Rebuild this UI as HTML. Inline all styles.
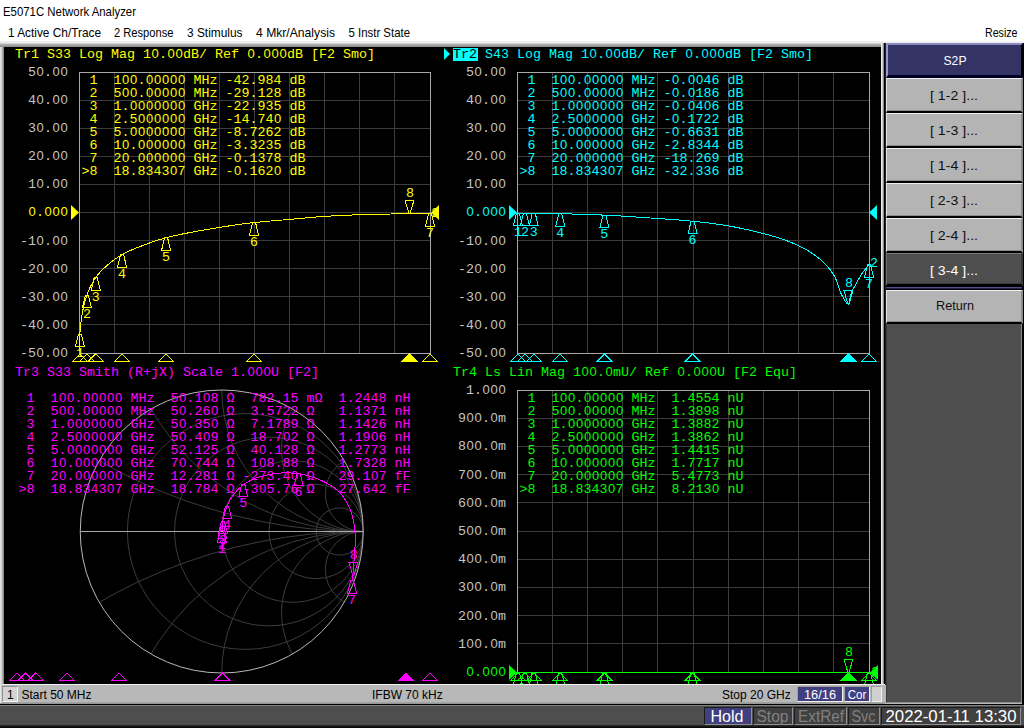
<!DOCTYPE html>
<html><head><meta charset="utf-8"><style>
*{margin:0;padding:0;box-sizing:border-box}
html,body{width:1024px;height:728px;overflow:hidden;background:#fff;position:relative}
.abs{position:absolute}
.btn{position:absolute;left:886px;width:137px;background:#b4b4b4;border-top:1px solid #f0f0f0;border-left:1px solid #e4e4e4;border-right:2px solid #8c8c8c;border-bottom:2px solid #000;box-shadow:inset 0 -1px 0 #8c8c8c}
.btn.sel{background:#333366;border-top:2px solid #8a8ac0;border-left:2px solid #9999cc;border-right:2px solid #000;border-bottom:3px solid #000022;box-shadow:none}
.btn.dark{background:#4e4e4e;border-top:1px solid #787878;border-left:1px solid #707070;border-right:2px solid #383838;box-shadow:inset 0 -1px 0 #383838}
</style></head><body>
<div class="abs" style="left:0;top:41px;width:1024px;height:687px;background:#b8b8b8"></div>
<div class="abs" style="left:0;top:41px;width:885px;height:6px;background:linear-gradient(#f0f0f0,#ececec 33%,#b0b0b0 55%,#8c8c8c)"></div>
<div class="abs" style="left:885px;top:41px;width:139px;height:2px;background:#f0f0f0"></div>
<div class="abs" style="left:0;top:47px;width:4px;height:637px;background:linear-gradient(90deg,#e0e0e0 25%,#d0d0d0 25%,#d0d0d0 50%,#b0b0b0 50%,#b0b0b0 75%,#888 75%)"></div>
<div class="abs" style="left:4px;top:47px;width:877px;height:637px;background:#000"></div>
<div class="abs" style="left:881px;top:43px;width:5px;height:642px;background:linear-gradient(90deg,#f0f0f0 20%,#c8c8c8 20%,#c8c8c8 40%,#909090 40%,#909090 60%,#000 60%,#000 80%,#202020 80%)"></div>
<div class="abs" style="left:886px;top:322px;width:136px;height:381px;background:#4e4e4e;border-top:2px solid #000;border-left:1px solid #3a3a3a;border-bottom:1px solid #8a8a8a;border-right:1px solid #8a8a8a"></div>
<div class="abs" style="left:1022px;top:43px;width:2px;height:661px;background:#000"></div>
<div class="btn sel" style="top:43px;height:35px"></div><div class="btn normal" style="top:78px;height:35px"></div><div class="btn normal" style="top:113px;height:35px"></div><div class="btn normal" style="top:148px;height:35px"></div><div class="btn normal" style="top:183px;height:35px"></div><div class="btn normal" style="top:218px;height:35px"></div><div class="btn dark" style="top:253px;height:33px"></div><div class="abs" style="left:886px;top:286px;width:137px;height:4px;background:#000"></div><div class="abs" style="left:886px;top:287px;width:136px;height:2px;background:linear-gradient(#505088 50%,#202048 50%)"></div><div class="btn normal" style="top:290px;height:34px"></div>
<div class="abs" style="left:0;top:684px;width:885px;height:20px;background:#b8b8b8;border-top:1px solid #f0f0f0"></div>
<div class="abs" style="left:0;top:702px;width:885px;height:2px;background:linear-gradient(#a8a8a8,#909090)"></div>
<div class="abs" style="left:0;top:684px;width:2px;height:19px;background:linear-gradient(90deg,#e4e4e4 50%,#d0d0d0 50%)"></div>
<div class="abs" style="left:2px;top:686px;width:16px;height:16px;background:#d4d4d4;border-top:1px solid #909090;border-left:1px solid #909090;border-bottom:1px solid #f4f4f4;border-right:1px solid #f4f4f4"></div>
<div class="abs" style="left:797px;top:686px;width:46px;height:16px;background:#404080;border-top:1px solid #a0a0a0;border-left:1px solid #a0a0a0;border-bottom:1px solid #f0f0f0;border-right:1px solid #f0f0f0"></div>
<div class="abs" style="left:844px;top:686px;width:26px;height:16px;background:#404080;border-top:1px solid #a0a0a0;border-left:1px solid #a0a0a0;border-bottom:1px solid #f0f0f0;border-right:1px solid #f0f0f0"></div>
<div class="abs" style="left:871px;top:686px;width:11px;height:16px;background:#d0d0d0;border-top:1px solid #a0a0a0;border-left:1px solid #a0a0a0;border-bottom:1px solid #f0f0f0;border-right:1px solid #f0f0f0"></div>
<div class="abs" style="left:0;top:704px;width:1024px;height:24px;background:#4e4e4e;border-top:1px solid #000"></div>
<div class="abs" style="left:0;top:705px;width:1024px;height:1px;background:#808080"></div>
<div class="abs" style="left:0;top:725px;width:1024px;height:3px;background:linear-gradient(#303030,#000)"></div>
<div class="abs" style="left:704px;top:707px;width:48px;height:18px;background:#404080;border-top:1px solid #1c1c1c;border-left:1px solid #1c1c1c;border-bottom:1px solid #909090;border-right:1px solid #909090"></div>
<div class="abs" style="left:753px;top:707px;width:40px;height:18px;background:#404040;border-top:1px solid #1c1c1c;border-left:1px solid #1c1c1c;border-bottom:1px solid #909090;border-right:1px solid #909090"></div>
<div class="abs" style="left:794px;top:707px;width:53px;height:18px;background:#404040;border-top:1px solid #1c1c1c;border-left:1px solid #1c1c1c;border-bottom:1px solid #909090;border-right:1px solid #909090"></div>
<div class="abs" style="left:848px;top:707px;width:32px;height:18px;background:#404040;border-top:1px solid #1c1c1c;border-left:1px solid #1c1c1c;border-bottom:1px solid #909090;border-right:1px solid #909090"></div>
<div class="abs" style="left:881px;top:707px;width:140px;height:18px;background:#404040;border-top:1px solid #1c1c1c;border-left:1px solid #1c1c1c;border-bottom:1px solid #909090;border-right:1px solid #909090"></div>
<svg width="877" height="637" viewBox="4 47 877 637" style="position:absolute;left:4px;top:47px;font-family:'Liberation Mono', monospace"><path d="M114.5 72V353M149.5 72V353M184.5 72V353M219.5 72V353M254.5 72V353M289.5 72V353M324.5 72V353M359.5 72V353M394.5 72V353M79 100.5H430M79 128.5H430M79 156.5H430M79 184.5H430M79 212.5H430M79 240.5H430M79 268.5H430M79 296.5H430M79 324.5H430" stroke="#3c3c3c" stroke-width="1" fill="none"/><rect x="79.5" y="72.5" width="351" height="281" stroke="#a8a8a8" stroke-width="1" fill="none"/><text x="28 36.4 44 52.4 60.4" y="76" fill="#c4c4c4" font-size="13.333" style="white-space:pre">5<tspan font-family="Liberation Sans" font-size="13">0</tspan>.<tspan font-family="Liberation Sans" font-size="13">00</tspan></text><text x="28 36.4 44 52.4 60.4" y="104" fill="#c4c4c4" font-size="13.333" style="white-space:pre">4<tspan font-family="Liberation Sans" font-size="13">0</tspan>.<tspan font-family="Liberation Sans" font-size="13">00</tspan></text><text x="28 36.4 44 52.4 60.4" y="132" fill="#c4c4c4" font-size="13.333" style="white-space:pre">3<tspan font-family="Liberation Sans" font-size="13">0</tspan>.<tspan font-family="Liberation Sans" font-size="13">00</tspan></text><text x="28 36.4 44 52.4 60.4" y="160" fill="#c4c4c4" font-size="13.333" style="white-space:pre">2<tspan font-family="Liberation Sans" font-size="13">0</tspan>.<tspan font-family="Liberation Sans" font-size="13">00</tspan></text><text x="28 36.4 44 52.4 60.4" y="188" fill="#c4c4c4" font-size="13.333" style="white-space:pre">1<tspan font-family="Liberation Sans" font-size="13">0</tspan>.<tspan font-family="Liberation Sans" font-size="13">00</tspan></text><text x="28.4 36 44.4 52.4 60.4" y="216" fill="#ffff00" font-size="13.333" style="white-space:pre"><tspan font-family="Liberation Sans" font-size="13">0</tspan>.<tspan font-family="Liberation Sans" font-size="13">000</tspan></text><text x="20 28 36.4 44 52.4 60.4" y="245" fill="#c4c4c4" font-size="13.333" style="white-space:pre">-1<tspan font-family="Liberation Sans" font-size="13">0</tspan>.<tspan font-family="Liberation Sans" font-size="13">00</tspan></text><text x="20 28 36.4 44 52.4 60.4" y="273" fill="#c4c4c4" font-size="13.333" style="white-space:pre">-2<tspan font-family="Liberation Sans" font-size="13">0</tspan>.<tspan font-family="Liberation Sans" font-size="13">00</tspan></text><text x="20 28 36.4 44 52.4 60.4" y="301" fill="#c4c4c4" font-size="13.333" style="white-space:pre">-3<tspan font-family="Liberation Sans" font-size="13">0</tspan>.<tspan font-family="Liberation Sans" font-size="13">00</tspan></text><text x="20 28 36.4 44 52.4 60.4" y="329" fill="#c4c4c4" font-size="13.333" style="white-space:pre">-4<tspan font-family="Liberation Sans" font-size="13">0</tspan>.<tspan font-family="Liberation Sans" font-size="13">00</tspan></text><text x="20 28 36.4 44 52.4 60.4" y="357" fill="#c4c4c4" font-size="13.333" style="white-space:pre">-5<tspan font-family="Liberation Sans" font-size="13">0</tspan>.<tspan font-family="Liberation Sans" font-size="13">00</tspan></text><polyline points="79.00,350.94 79.29,344.52 79.58,338.72 79.88,334.06 80.17,330.36 80.46,327.04 80.75,324.07 81.05,321.45 81.34,319.16 81.63,317.18 81.92,315.40 82.22,313.70 82.51,312.08 82.80,310.54 83.09,309.08 83.39,307.68 83.68,306.36 83.97,305.09 84.27,303.89 84.56,302.74 84.85,301.64 85.14,300.59 85.44,299.59 85.73,298.63 86.02,297.72 86.31,296.83 86.61,295.98 86.90,295.15 87.19,294.35 87.48,293.57 87.78,292.81 88.07,292.07 88.36,291.34 88.65,290.64 88.94,289.95 89.24,289.27 89.53,288.62 89.82,287.98 90.11,287.35 90.41,286.74 90.70,286.15 90.99,285.56 91.28,285.00 91.58,284.44 91.87,283.90 92.16,283.37 92.45,282.85 92.75,282.34 93.04,281.84 93.33,281.35 93.62,280.88 93.92,280.41 94.21,279.95 94.50,279.49 94.80,279.05 95.09,278.61 95.38,278.18 95.67,277.76 95.97,277.34 96.26,276.93 96.55,276.53 96.84,276.13 97.14,275.74 97.43,275.36 97.72,274.99 98.01,274.62 98.31,274.26 98.60,273.91 98.89,273.56 99.18,273.21 99.47,272.88 99.77,272.54 100.06,272.22 100.35,271.90 100.65,271.58 100.94,271.27 101.23,270.96 101.52,270.66 101.81,270.36 102.11,270.06 102.40,269.77 102.69,269.48 102.98,269.20 103.28,268.92 103.57,268.64 103.86,268.37 104.16,268.09 104.45,267.82 104.74,267.55 105.03,267.29 105.33,267.02 105.62,266.76 105.91,266.50 106.20,266.24 106.50,265.98 106.79,265.72 107.08,265.47 107.37,265.22 107.67,264.96 107.96,264.71 108.25,264.47 108.54,264.22 108.84,263.97 109.13,263.73 109.42,263.49 109.71,263.25 110.01,263.01 110.30,262.77 110.59,262.54 110.88,262.31 111.18,262.07 111.47,261.84 111.76,261.62 112.05,261.39 112.34,261.16 112.64,260.94 112.93,260.72 113.22,260.50 113.52,260.28 113.81,260.07 114.10,259.85 114.39,259.64 114.69,259.43 114.98,259.22 115.27,259.01 115.56,258.81 115.86,258.60 116.15,258.40 116.44,258.20 116.73,258.00 117.03,257.80 117.32,257.61 117.61,257.42 117.90,257.22 118.20,257.03 118.49,256.85 118.78,256.66 119.07,256.48 119.37,256.29 119.66,256.11 119.95,255.93 120.24,255.76 120.54,255.58 120.83,255.41 121.12,255.24 121.41,255.06 121.71,254.90 122.00,254.73 122.29,254.57 122.58,254.40 122.88,254.24 123.17,254.08 123.46,253.92 123.75,253.76 124.04,253.61 124.34,253.45 124.63,253.30 124.92,253.15 125.22,253.00 125.51,252.85 125.80,252.70 126.09,252.55 126.39,252.41 126.68,252.26 126.97,252.12 127.26,251.98 127.56,251.84 127.85,251.70 128.14,251.56 128.43,251.42 128.72,251.29 129.02,251.15 129.31,251.02 129.60,250.88 129.90,250.75 130.19,250.62 130.48,250.49 130.77,250.36 131.06,250.23 131.36,250.10 131.65,249.97 131.94,249.85 132.24,249.72 132.53,249.59 132.82,249.47 133.11,249.35 133.41,249.22 133.70,249.10 133.99,248.98 134.28,248.86 134.58,248.74 134.87,248.62 135.16,248.50 135.45,248.38 135.75,248.26 136.04,248.14 136.33,248.02 136.62,247.90 136.92,247.79 137.21,247.67 137.50,247.55 137.79,247.44 138.09,247.32 138.38,247.21 138.67,247.09 138.96,246.98 139.25,246.86 139.55,246.75 139.84,246.63 140.13,246.52 140.43,246.41 140.72,246.29 141.01,246.18 141.30,246.06 141.60,245.95 141.89,245.84 142.18,245.73 142.47,245.61 142.76,245.50 143.06,245.39 143.35,245.28 143.64,245.16 143.94,245.05 144.23,244.94 144.52,244.83 144.81,244.72 145.11,244.61 145.40,244.50 145.69,244.39 145.98,244.28 146.28,244.17 146.57,244.06 146.86,243.95 147.15,243.84 147.44,243.74 147.74,243.63 148.03,243.52 148.32,243.41 148.62,243.31 148.91,243.20 149.20,243.09 149.49,242.99 149.78,242.88 150.08,242.78 150.37,242.67 150.66,242.57 150.96,242.46 151.25,242.36 151.54,242.26 151.83,242.16 152.12,242.05 152.42,241.95 152.71,241.85 153.00,241.75 153.30,241.65 153.59,241.55 153.88,241.45 154.17,241.35 154.47,241.25 154.76,241.15 155.05,241.05 155.34,240.96 155.63,240.86 155.93,240.76 156.22,240.67 156.51,240.57 156.81,240.48 157.10,240.38 157.39,240.29 157.68,240.20 157.98,240.10 158.27,240.01 158.56,239.92 158.85,239.83 159.14,239.74 159.44,239.65 159.73,239.56 160.02,239.47 160.31,239.38 160.61,239.30 160.90,239.21 161.19,239.12 161.49,239.04 161.78,238.95 162.07,238.87 162.36,238.78 162.66,238.70 162.95,238.62 163.24,238.53 163.53,238.45 163.82,238.37 164.12,238.29 164.41,238.21 164.70,238.13 165.00,238.06 165.29,237.98 165.58,237.90 165.87,237.83 166.17,237.75 166.46,237.68 166.75,237.60 167.04,237.53 167.34,237.45 167.63,237.38 167.92,237.31 168.21,237.23 168.50,237.16 168.80,237.09 169.09,237.02 169.38,236.95 169.68,236.87 169.97,236.80 170.26,236.73 170.55,236.66 170.84,236.59 171.14,236.52 171.43,236.45 171.72,236.38 172.01,236.31 172.31,236.24 172.60,236.18 172.89,236.11 173.19,236.04 173.48,235.97 173.77,235.90 174.06,235.84 174.36,235.77 174.65,235.70 174.94,235.64 175.23,235.57 175.53,235.51 175.82,235.44 176.11,235.37 176.40,235.31 176.70,235.24 176.99,235.18 177.28,235.12 177.57,235.05 177.87,234.99 178.16,234.92 178.45,234.86 178.74,234.80 179.04,234.73 179.33,234.67 179.62,234.61 179.91,234.55 180.20,234.49 180.50,234.42 180.79,234.36 181.08,234.30 181.38,234.24 181.67,234.18 181.96,234.12 182.25,234.06 182.55,234.00 182.84,233.94 183.13,233.88 183.42,233.82 183.72,233.76 184.01,233.70 184.30,233.64 184.59,233.58 184.88,233.52 185.18,233.46 185.47,233.41 185.76,233.35 186.06,233.29 186.35,233.23 186.64,233.17 186.93,233.12 187.23,233.06 187.52,233.00 187.81,232.95 188.10,232.89 188.40,232.83 188.69,232.78 188.98,232.72 189.27,232.66 189.56,232.61 189.86,232.55 190.15,232.50 190.44,232.44 190.74,232.39 191.03,232.33 191.32,232.28 191.61,232.22 191.91,232.17 192.20,232.11 192.49,232.06 192.78,232.01 193.08,231.95 193.37,231.90 193.66,231.84 193.95,231.79 194.25,231.74 194.54,231.68 194.83,231.63 195.12,231.58 195.42,231.52 195.71,231.47 196.00,231.42 196.29,231.37 196.59,231.31 196.88,231.26 197.17,231.21 197.46,231.16 197.75,231.10 198.05,231.05 198.34,231.00 198.63,230.95 198.93,230.90 199.22,230.85 199.51,230.79 199.80,230.74 200.10,230.69 200.39,230.64 200.68,230.59 200.97,230.54 201.26,230.49 201.56,230.44 201.85,230.39 202.14,230.34 202.44,230.29 202.73,230.24 203.02,230.18 203.31,230.13 203.61,230.08 203.90,230.03 204.19,229.98 204.48,229.93 204.78,229.88 205.07,229.83 205.36,229.78 205.65,229.73 205.94,229.68 206.24,229.63 206.53,229.58 206.82,229.54 207.12,229.49 207.41,229.44 207.70,229.39 207.99,229.34 208.28,229.29 208.58,229.24 208.87,229.19 209.16,229.14 209.46,229.09 209.75,229.04 210.04,228.99 210.33,228.94 210.62,228.89 210.92,228.84 211.21,228.80 211.50,228.75 211.80,228.70 212.09,228.65 212.38,228.60 212.67,228.55 212.97,228.50 213.26,228.45 213.55,228.40 213.84,228.36 214.14,228.31 214.43,228.26 214.72,228.21 215.01,228.16 215.31,228.11 215.60,228.06 215.89,228.02 216.18,227.97 216.48,227.92 216.77,227.87 217.06,227.82 217.35,227.78 217.65,227.73 217.94,227.68 218.23,227.63 218.52,227.58 218.82,227.54 219.11,227.49 219.40,227.44 219.69,227.39 219.99,227.35 220.28,227.30 220.57,227.25 220.86,227.21 221.16,227.16 221.45,227.11 221.74,227.06 222.03,227.02 222.33,226.97 222.62,226.92 222.91,226.88 223.20,226.83 223.50,226.79 223.79,226.74 224.08,226.69 224.37,226.65 224.67,226.60 224.96,226.55 225.25,226.51 225.54,226.46 225.84,226.42 226.13,226.37 226.42,226.33 226.71,226.28 227.00,226.24 227.30,226.19 227.59,226.14 227.88,226.10 228.17,226.05 228.47,226.01 228.76,225.97 229.05,225.92 229.35,225.88 229.64,225.83 229.93,225.79 230.22,225.74 230.52,225.70 230.81,225.66 231.10,225.61 231.39,225.57 231.69,225.52 231.98,225.48 232.27,225.44 232.56,225.39 232.86,225.35 233.15,225.31 233.44,225.26 233.73,225.22 234.03,225.18 234.32,225.14 234.61,225.09 234.90,225.05 235.20,225.01 235.49,224.97 235.78,224.92 236.07,224.88 236.37,224.84 236.66,224.80 236.95,224.76 237.24,224.72 237.53,224.68 237.83,224.63 238.12,224.59 238.41,224.55 238.71,224.51 239.00,224.47 239.29,224.43 239.58,224.39 239.88,224.35 240.17,224.31 240.46,224.27 240.75,224.23 241.04,224.19 241.34,224.15 241.63,224.11 241.92,224.07 242.22,224.03 242.51,224.00 242.80,223.96 243.09,223.92 243.39,223.88 243.68,223.84 243.97,223.80 244.26,223.77 244.56,223.73 244.85,223.69 245.14,223.65 245.43,223.62 245.73,223.58 246.02,223.54 246.31,223.50 246.60,223.47 246.90,223.43 247.19,223.39 247.48,223.36 247.77,223.32 248.07,223.29 248.36,223.25 248.65,223.22 248.94,223.18 249.24,223.14 249.53,223.11 249.82,223.07 250.11,223.04 250.41,223.01 250.70,222.97 250.99,222.94 251.28,222.90 251.58,222.87 251.87,222.84 252.16,222.80 252.45,222.77 252.75,222.74 253.04,222.70 253.33,222.67 253.62,222.64 253.92,222.61 254.21,222.57 254.50,222.54 254.79,222.51 255.09,222.48 255.38,222.45 255.67,222.41 255.96,222.38 256.25,222.35 256.55,222.32 256.84,222.29 257.13,222.26 257.43,222.23 257.72,222.20 258.01,222.17 258.30,222.14 258.60,222.11 258.89,222.08 259.18,222.05 259.47,222.02 259.76,221.99 260.06,221.96 260.35,221.94 260.64,221.91 260.94,221.88 261.23,221.85 261.52,221.82 261.81,221.79 262.11,221.77 262.40,221.74 262.69,221.71 262.98,221.68 263.27,221.65 263.57,221.63 263.86,221.60 264.15,221.57 264.44,221.55 264.74,221.52 265.03,221.49 265.32,221.46 265.62,221.44 265.91,221.41 266.20,221.39 266.49,221.36 266.79,221.33 267.08,221.31 267.37,221.28 267.66,221.25 267.96,221.23 268.25,221.20 268.54,221.18 268.83,221.15 269.12,221.13 269.42,221.10 269.71,221.07 270.00,221.05 270.30,221.02 270.59,221.00 270.88,220.97 271.17,220.95 271.47,220.92 271.76,220.90 272.05,220.87 272.34,220.85 272.63,220.82 272.93,220.80 273.22,220.77 273.51,220.75 273.81,220.72 274.10,220.70 274.39,220.68 274.68,220.65 274.98,220.63 275.27,220.60 275.56,220.58 275.85,220.55 276.15,220.53 276.44,220.50 276.73,220.48 277.02,220.46 277.32,220.43 277.61,220.41 277.90,220.38 278.19,220.36 278.49,220.33 278.78,220.31 279.07,220.29 279.36,220.26 279.65,220.24 279.95,220.21 280.24,220.19 280.53,220.17 280.83,220.14 281.12,220.12 281.41,220.09 281.70,220.07 282.00,220.04 282.29,220.02 282.58,220.00 282.87,219.97 283.16,219.95 283.46,219.92 283.75,219.90 284.04,219.87 284.33,219.85 284.63,219.82 284.92,219.80 285.21,219.78 285.50,219.75 285.80,219.73 286.09,219.70 286.38,219.68 286.68,219.65 286.97,219.63 287.26,219.60 287.55,219.58 287.85,219.55 288.14,219.53 288.43,219.50 288.72,219.48 289.01,219.45 289.31,219.43 289.60,219.40 289.89,219.38 290.19,219.35 290.48,219.32 290.77,219.30 291.06,219.27 291.36,219.25 291.65,219.22 291.94,219.20 292.23,219.17 292.53,219.14 292.82,219.12 293.11,219.09 293.40,219.07 293.70,219.04 293.99,219.01 294.28,218.99 294.57,218.96 294.87,218.93 295.16,218.91 295.45,218.88 295.74,218.85 296.04,218.83 296.33,218.80 296.62,218.77 296.91,218.75 297.21,218.72 297.50,218.69 297.79,218.67 298.08,218.64 298.38,218.61 298.67,218.59 298.96,218.56 299.25,218.53 299.55,218.51 299.84,218.48 300.13,218.45 300.42,218.42 300.72,218.40 301.01,218.37 301.30,218.34 301.59,218.32 301.88,218.29 302.18,218.26 302.47,218.24 302.76,218.21 303.05,218.18 303.35,218.16 303.64,218.13 303.93,218.10 304.23,218.07 304.52,218.05 304.81,218.02 305.10,217.99 305.39,217.97 305.69,217.94 305.98,217.91 306.27,217.89 306.57,217.86 306.86,217.83 307.15,217.81 307.44,217.78 307.74,217.76 308.03,217.73 308.32,217.70 308.61,217.68 308.91,217.65 309.20,217.62 309.49,217.60 309.78,217.57 310.08,217.55 310.37,217.52 310.66,217.49 310.95,217.47 311.25,217.44 311.54,217.42 311.83,217.39 312.12,217.37 312.42,217.34 312.71,217.32 313.00,217.29 313.29,217.27 313.59,217.24 313.88,217.22 314.17,217.19 314.46,217.17 314.75,217.14 315.05,217.12 315.34,217.09 315.63,217.07 315.93,217.04 316.22,217.02 316.51,217.00 316.80,216.97 317.10,216.95 317.39,216.92 317.68,216.90 317.97,216.88 318.27,216.85 318.56,216.83 318.85,216.81 319.14,216.78 319.44,216.76 319.73,216.74 320.02,216.72 320.31,216.69 320.61,216.67 320.90,216.65 321.19,216.63 321.48,216.61 321.77,216.58 322.07,216.56 322.36,216.54 322.65,216.52 322.95,216.50 323.24,216.48 323.53,216.46 323.82,216.44 324.12,216.42 324.41,216.40 324.70,216.38 324.99,216.36 325.29,216.34 325.58,216.32 325.87,216.30 326.16,216.28 326.46,216.26 326.75,216.24 327.04,216.22 327.33,216.20 327.63,216.18 327.92,216.17 328.21,216.15 328.50,216.13 328.80,216.11 329.09,216.10 329.38,216.08 329.67,216.06 329.97,216.05 330.26,216.03 330.55,216.01 330.84,216.00 331.13,215.98 331.43,215.96 331.72,215.95 332.01,215.93 332.31,215.91 332.60,215.90 332.89,215.88 333.18,215.87 333.48,215.85 333.77,215.83 334.06,215.82 334.35,215.80 334.64,215.79 334.94,215.77 335.23,215.76 335.52,215.74 335.81,215.73 336.11,215.71 336.40,215.70 336.69,215.68 336.99,215.67 337.28,215.65 337.57,215.64 337.86,215.62 338.16,215.61 338.45,215.59 338.74,215.58 339.03,215.56 339.32,215.55 339.62,215.53 339.91,215.52 340.20,215.51 340.50,215.49 340.79,215.48 341.08,215.46 341.37,215.45 341.67,215.44 341.96,215.42 342.25,215.41 342.54,215.40 342.84,215.38 343.13,215.37 343.42,215.36 343.71,215.34 344.00,215.33 344.30,215.32 344.59,215.30 344.88,215.29 345.18,215.28 345.47,215.26 345.76,215.25 346.05,215.24 346.35,215.23 346.64,215.21 346.93,215.20 347.22,215.19 347.52,215.18 347.81,215.17 348.10,215.15 348.39,215.14 348.69,215.13 348.98,215.12 349.27,215.11 349.56,215.09 349.86,215.08 350.15,215.07 350.44,215.06 350.73,215.05 351.03,215.04 351.32,215.03 351.61,215.01 351.90,215.00 352.20,214.99 352.49,214.98 352.78,214.97 353.07,214.96 353.37,214.95 353.66,214.94 353.95,214.93 354.24,214.92 354.54,214.91 354.83,214.90 355.12,214.89 355.41,214.88 355.71,214.87 356.00,214.86 356.29,214.85 356.58,214.84 356.88,214.83 357.17,214.82 357.46,214.81 357.75,214.80 358.05,214.79 358.34,214.78 358.63,214.77 358.92,214.76 359.21,214.75 359.51,214.74 359.80,214.73 360.09,214.73 360.38,214.72 360.68,214.71 360.97,214.70 361.26,214.69 361.56,214.68 361.85,214.67 362.14,214.66 362.43,214.66 362.73,214.65 363.02,214.64 363.31,214.63 363.60,214.62 363.90,214.61 364.19,214.60 364.48,214.60 364.77,214.59 365.06,214.58 365.36,214.57 365.65,214.56 365.94,214.56 366.24,214.55 366.53,214.54 366.82,214.53 367.11,214.52 367.41,214.52 367.70,214.51 367.99,214.50 368.28,214.49 368.58,214.49 368.87,214.48 369.16,214.47 369.45,214.46 369.75,214.46 370.04,214.45 370.33,214.44 370.62,214.43 370.92,214.43 371.21,214.42 371.50,214.41 371.79,214.40 372.09,214.40 372.38,214.39 372.67,214.38 372.96,214.38 373.25,214.37 373.55,214.36 373.84,214.36 374.13,214.35 374.43,214.34 374.72,214.33 375.01,214.33 375.30,214.32 375.59,214.31 375.89,214.31 376.18,214.30 376.47,214.29 376.77,214.29 377.06,214.28 377.35,214.27 377.64,214.27 377.94,214.26 378.23,214.26 378.52,214.25 378.81,214.24 379.11,214.24 379.40,214.23 379.69,214.22 379.98,214.22 380.28,214.21 380.57,214.20 380.86,214.20 381.15,214.19 381.45,214.19 381.74,214.18 382.03,214.17 382.32,214.17 382.62,214.16 382.91,214.16 383.20,214.15 383.49,214.14 383.79,214.14 384.08,214.13 384.37,214.13 384.66,214.12 384.95,214.11 385.25,214.11 385.54,214.10 385.83,214.10 386.13,214.09 386.42,214.09 386.71,214.08 387.00,214.07 387.30,214.07 387.59,214.06 387.88,214.06 388.17,214.05 388.47,214.04 388.76,214.04 389.05,214.03 389.34,214.03 389.64,214.02 389.93,214.01 390.22,214.01 390.51,214.00 390.81,214.00 391.10,213.99 391.39,213.98 391.68,213.98 391.98,213.97 392.27,213.97 392.56,213.96 392.85,213.95 393.15,213.95 393.44,213.94 393.73,213.94 394.02,213.93 394.31,213.92 394.61,213.92 394.90,213.91 395.19,213.91 395.49,213.90 395.78,213.89 396.07,213.89 396.36,213.88 396.66,213.88 396.95,213.87 397.24,213.87 397.53,213.86 397.82,213.86 398.12,213.85 398.41,213.85 398.70,213.84 399.00,213.83 399.29,213.83 399.58,213.82 399.87,213.82 400.17,213.81 400.46,213.81 400.75,213.80 401.04,213.80 401.33,213.80 401.63,213.79 401.92,213.79 402.21,213.78 402.51,213.78 402.80,213.77 403.09,213.77 403.38,213.77 403.68,213.76 403.97,213.76 404.26,213.75 404.55,213.75 404.85,213.75 405.14,213.74 405.43,213.74 405.72,213.74 406.02,213.73 406.31,213.73 406.60,213.73 406.89,213.72 407.19,213.72 407.48,213.72 407.77,213.72 408.06,213.71 408.36,213.71 408.65,213.71 408.94,213.71 409.23,213.71 409.53,213.71 409.82,213.70 410.11,213.70 410.40,213.70 410.70,213.70 410.99,213.70 411.28,213.70 411.57,213.69 411.87,213.69 412.16,213.69 412.45,213.69 412.74,213.69 413.04,213.69 413.33,213.69 413.62,213.68 413.91,213.68 414.21,213.68 414.50,213.68 414.79,213.68 415.08,213.68 415.38,213.68 415.67,213.67 415.96,213.67 416.25,213.67 416.55,213.67 416.84,213.67 417.13,213.67 417.42,213.67 417.72,213.67 418.01,213.66 418.30,213.66 418.59,213.66 418.89,213.66 419.18,213.66 419.47,213.66 419.76,213.66 420.06,213.66 420.35,213.66 420.64,213.65 420.93,213.65 421.23,213.65 421.52,213.65 421.81,213.65 422.10,213.65 422.40,213.65 422.69,213.65 422.98,213.65 423.27,213.65 423.57,213.65 423.86,213.64 424.15,213.64 424.44,213.64 424.74,213.64 425.03,213.64 425.32,213.64 425.61,213.64 425.91,213.64 426.20,213.64 426.49,213.64 426.78,213.64 427.08,213.64 427.37,213.64 427.66,213.64 427.95,213.64 428.25,213.64 428.54,213.64 428.83,213.64 429.12,213.64 429.42,213.64 429.71,213.64 430.00,213.64" stroke="#ffff00" fill="none" stroke-width="1" shape-rendering="crispEdges"/><polygon points="78.3796992481203,334.03504000000004 81.3796992481203,334.03504000000004 84.3796992481203,346.53504000000004 75.3796992481203,346.53504000000004" stroke="#ffff00" fill="none" stroke-width="1" shape-rendering="crispEdges"/><text x="75.8797" y="357.03504000000004" fill="#ffff00" font-size="13.333" style="white-space:pre">1</text><polygon points="85.4172932330827,295.09968000000003 88.4172932330827,295.09968000000003 91.4172932330827,307.59968000000003 82.4172932330827,307.59968000000003" stroke="#ffff00" fill="none" stroke-width="1" shape-rendering="crispEdges"/><text x="82.9173" y="318.09968000000003" fill="#ffff00" font-size="13.333" style="white-space:pre">2</text><polygon points="94.21428571428571,277.69735000000003 97.21428571428571,277.69735000000003 100.21428571428571,290.19735000000003 91.21428571428571,290.19735000000003" stroke="#ffff00" fill="none" stroke-width="1" shape-rendering="crispEdges"/><text x="91.7143" y="300.69735000000003" fill="#ffff00" font-size="13.333" style="white-space:pre">3</text><polygon points="120.60526315789474,254.6694 123.60526315789474,254.6694 126.60526315789474,267.1694 117.60526315789474,267.1694" stroke="#ffff00" fill="none" stroke-width="1" shape-rendering="crispEdges"/><text x="118.105" y="277.6694" fill="#ffff00" font-size="13.333" style="white-space:pre">4</text><polygon points="164.59022556390977,237.77062199999997 167.59022556390977,237.77062199999997 170.59022556390977,250.27062199999997 161.59022556390977,250.27062199999997" stroke="#ffff00" fill="none" stroke-width="1" shape-rendering="crispEdges"/><text x="162.09" y="260.770622" fill="#ffff00" font-size="13.333" style="white-space:pre">5</text><polygon points="252.56015037593983,222.589035 255.56015037593983,222.589035 258.5601503759398,235.089035 249.56015037593983,235.089035" stroke="#ffff00" fill="none" stroke-width="1" shape-rendering="crispEdges"/><text x="250.06" y="245.589035" fill="#ffff00" font-size="13.333" style="white-space:pre">6</text><polygon points="428.5,213.637218 431.5,213.637218 434.5,226.137218 425.5,226.137218" stroke="#ffff00" fill="none" stroke-width="1" shape-rendering="crispEdges"/><text x="426" y="236.637218" fill="#ffff00" font-size="13.333" style="white-space:pre">7</text><polygon points="408.99081488721805,213.70522 409.99081488721805,213.70522 413.99081488721805,200.20522 404.99081488721805,200.20522" stroke="#ffff00" fill="none" stroke-width="1" shape-rendering="crispEdges"/><text x="405.991" y="196.70522" fill="#ffff00" font-size="13.333" style="white-space:pre">8</text><polygon points="71,205.0 79,212.5 71,220.0" fill="#ffff00"/><text x="431" y="217" fill="#ffff00" font-size="13.333" style="white-space:pre">2</text><polygon points="439,205.0 431,212.5 439,220.0" fill="#ffff00"/><polygon points="79.8796992481203,354 86.8796992481203,361 72.8796992481203,361" stroke="#ffff00" fill="none" stroke-width="1" shape-rendering="crispEdges"/><polygon points="86.9172932330827,354 93.9172932330827,361 79.9172932330827,361" stroke="#ffff00" fill="none" stroke-width="1" shape-rendering="crispEdges"/><polygon points="95.71428571428571,354 102.71428571428571,361 88.71428571428571,361" stroke="#ffff00" fill="none" stroke-width="1" shape-rendering="crispEdges"/><polygon points="122.10526315789474,354 129.10526315789474,361 115.10526315789474,361" stroke="#ffff00" fill="none" stroke-width="1" shape-rendering="crispEdges"/><polygon points="166.09022556390977,354 173.09022556390977,361 159.09022556390977,361" stroke="#ffff00" fill="none" stroke-width="1" shape-rendering="crispEdges"/><polygon points="254.06015037593983,354 261.0601503759398,361 247.06015037593983,361" stroke="#ffff00" fill="none" stroke-width="1" shape-rendering="crispEdges"/><polygon points="430.0,354 437.0,361 423.0,361" stroke="#ffff00" fill="none" stroke-width="1" shape-rendering="crispEdges"/><polygon points="409.49081488721805,354 416.49081488721805,361 402.49081488721805,361" stroke="#ffff00" fill="#ffff00" stroke-width="1" shape-rendering="crispEdges"/><text x="15 23 31 39 47 55 63 71 79 87 95 103 111 119 127 135 143 151.4 159 167.4 175.4 183 191 199 207 215 223 231 239 247.4 255 263.4 271.4 279.4 287 295 303 311 319 327 335 343 351 359 367" y="58" fill="#ffff00" font-size="13.333" style="white-space:pre">Tr1 S33 Log Mag 1<tspan font-family="Liberation Sans" font-size="13">0</tspan>.<tspan font-family="Liberation Sans" font-size="13">00</tspan>dB/ Ref <tspan font-family="Liberation Sans" font-size="13">0</tspan>.<tspan font-family="Liberation Sans" font-size="13">000</tspan>dB [F2 Smo]</text><text x="81.5 89.5 97.5 105.5 113.5 121.9 129.9 137.5 145.9 153.9 161.9 169.9 177.9 185.5 193.5 201.5 209.5 217.5 225.5 233.5 241.5 249.5 257.5 265.5 273.5 281.5 289.5 297.5" y="84" fill="#ffff00" font-size="13.333" style="white-space:pre"> 1  1<tspan font-family="Liberation Sans" font-size="13">00</tspan>.<tspan font-family="Liberation Sans" font-size="13">00000</tspan> MHz -42.984 dB</text><text x="81.5 89.5 97.5 105.5 113.5 121.9 129.9 137.5 145.9 153.9 161.9 169.9 177.9 185.5 193.5 201.5 209.5 217.5 225.5 233.5 241.5 249.5 257.5 265.5 273.5 281.5 289.5 297.5" y="97" fill="#ffff00" font-size="13.333" style="white-space:pre"> 2  5<tspan font-family="Liberation Sans" font-size="13">00</tspan>.<tspan font-family="Liberation Sans" font-size="13">00000</tspan> MHz -29.128 dB</text><text x="81.5 89.5 97.5 105.5 113.5 121.5 129.9 137.9 145.9 153.9 161.9 169.9 177.9 185.5 193.5 201.5 209.5 217.5 225.5 233.5 241.5 249.5 257.5 265.5 273.5 281.5 289.5 297.5" y="110" fill="#ffff00" font-size="13.333" style="white-space:pre"> 3  1.<tspan font-family="Liberation Sans" font-size="13">0000000</tspan> GHz -22.935 dB</text><text x="81.5 89.5 97.5 105.5 113.5 121.5 129.5 137.9 145.9 153.9 161.9 169.9 177.9 185.5 193.5 201.5 209.5 217.5 225.5 233.5 241.5 249.5 257.5 265.5 273.9 281.5 289.5 297.5" y="123" fill="#ffff00" font-size="13.333" style="white-space:pre"> 4  2.5<tspan font-family="Liberation Sans" font-size="13">000000</tspan> GHz -14.74<tspan font-family="Liberation Sans" font-size="13">0</tspan> dB</text><text x="81.5 89.5 97.5 105.5 113.5 121.5 129.9 137.9 145.9 153.9 161.9 169.9 177.9 185.5 193.5 201.5 209.5 217.5 225.5 233.5 241.5 249.5 257.5 265.5 273.5 281.5 289.5 297.5" y="136" fill="#ffff00" font-size="13.333" style="white-space:pre"> 5  5.<tspan font-family="Liberation Sans" font-size="13">0000000</tspan> GHz -8.7262 dB</text><text x="81.5 89.5 97.5 105.5 113.5 121.9 129.5 137.9 145.9 153.9 161.9 169.9 177.9 185.5 193.5 201.5 209.5 217.5 225.5 233.5 241.5 249.5 257.5 265.5 273.5 281.5 289.5 297.5" y="149" fill="#ffff00" font-size="13.333" style="white-space:pre"> 6  1<tspan font-family="Liberation Sans" font-size="13">0</tspan>.<tspan font-family="Liberation Sans" font-size="13">000000</tspan> GHz -3.3235 dB</text><text x="81.5 89.5 97.5 105.5 113.5 121.9 129.5 137.9 145.9 153.9 161.9 169.9 177.9 185.5 193.5 201.5 209.5 217.5 225.5 233.9 241.5 249.5 257.5 265.5 273.5 281.5 289.5 297.5" y="162" fill="#ffff00" font-size="13.333" style="white-space:pre"> 7  2<tspan font-family="Liberation Sans" font-size="13">0</tspan>.<tspan font-family="Liberation Sans" font-size="13">000000</tspan> GHz -<tspan font-family="Liberation Sans" font-size="13">0</tspan>.1378 dB</text><text x="81.5 89.5 97.5 105.5 113.5 121.5 129.5 137.5 145.5 153.5 161.5 169.9 177.5 185.5 193.5 201.5 209.5 217.5 225.5 233.9 241.5 249.5 257.5 265.5 273.9 281.5 289.5 297.5" y="175" fill="#ffff00" font-size="13.333" style="white-space:pre">&gt;8  18.8343<tspan font-family="Liberation Sans" font-size="13">0</tspan>7 GHz -<tspan font-family="Liberation Sans" font-size="13">0</tspan>.162<tspan font-family="Liberation Sans" font-size="13">0</tspan> dB</text><path d="M552.5 72V353M587.5 72V353M622.5 72V353M657.5 72V353M693.5 72V353M728.5 72V353M763.5 72V353M798.5 72V353M833.5 72V353M517 100.5H869M517 128.5H869M517 156.5H869M517 184.5H869M517 212.5H869M517 240.5H869M517 268.5H869M517 296.5H869M517 324.5H869" stroke="#3c3c3c" stroke-width="1" fill="none"/><rect x="517.5" y="72.5" width="352" height="281" stroke="#a8a8a8" stroke-width="1" fill="none"/><text x="466 474.4 482 490.4 498.4" y="76" fill="#c4c4c4" font-size="13.333" style="white-space:pre">5<tspan font-family="Liberation Sans" font-size="13">0</tspan>.<tspan font-family="Liberation Sans" font-size="13">00</tspan></text><text x="466 474.4 482 490.4 498.4" y="104" fill="#c4c4c4" font-size="13.333" style="white-space:pre">4<tspan font-family="Liberation Sans" font-size="13">0</tspan>.<tspan font-family="Liberation Sans" font-size="13">00</tspan></text><text x="466 474.4 482 490.4 498.4" y="132" fill="#c4c4c4" font-size="13.333" style="white-space:pre">3<tspan font-family="Liberation Sans" font-size="13">0</tspan>.<tspan font-family="Liberation Sans" font-size="13">00</tspan></text><text x="466 474.4 482 490.4 498.4" y="160" fill="#c4c4c4" font-size="13.333" style="white-space:pre">2<tspan font-family="Liberation Sans" font-size="13">0</tspan>.<tspan font-family="Liberation Sans" font-size="13">00</tspan></text><text x="466 474.4 482 490.4 498.4" y="188" fill="#c4c4c4" font-size="13.333" style="white-space:pre">1<tspan font-family="Liberation Sans" font-size="13">0</tspan>.<tspan font-family="Liberation Sans" font-size="13">00</tspan></text><text x="466.4 474 482.4 490.4 498.4" y="216" fill="#00ffff" font-size="13.333" style="white-space:pre"><tspan font-family="Liberation Sans" font-size="13">0</tspan>.<tspan font-family="Liberation Sans" font-size="13">000</tspan></text><text x="458 466 474.4 482 490.4 498.4" y="245" fill="#c4c4c4" font-size="13.333" style="white-space:pre">-1<tspan font-family="Liberation Sans" font-size="13">0</tspan>.<tspan font-family="Liberation Sans" font-size="13">00</tspan></text><text x="458 466 474.4 482 490.4 498.4" y="273" fill="#c4c4c4" font-size="13.333" style="white-space:pre">-2<tspan font-family="Liberation Sans" font-size="13">0</tspan>.<tspan font-family="Liberation Sans" font-size="13">00</tspan></text><text x="458 466 474.4 482 490.4 498.4" y="301" fill="#c4c4c4" font-size="13.333" style="white-space:pre">-3<tspan font-family="Liberation Sans" font-size="13">0</tspan>.<tspan font-family="Liberation Sans" font-size="13">00</tspan></text><text x="458 466 474.4 482 490.4 498.4" y="329" fill="#c4c4c4" font-size="13.333" style="white-space:pre">-4<tspan font-family="Liberation Sans" font-size="13">0</tspan>.<tspan font-family="Liberation Sans" font-size="13">00</tspan></text><text x="458 466 474.4 482 490.4 498.4" y="357" fill="#c4c4c4" font-size="13.333" style="white-space:pre">-5<tspan font-family="Liberation Sans" font-size="13">0</tspan>.<tspan font-family="Liberation Sans" font-size="13">00</tspan></text><polyline points="517.00,213.26 517.18,213.26 517.35,213.26 517.53,213.26 517.70,213.26 517.88,213.26 518.06,213.26 518.23,213.27 518.41,213.27 518.58,213.27 518.76,213.27 518.94,213.27 519.11,213.27 519.29,213.27 519.46,213.27 519.64,213.27 519.82,213.27 519.99,213.28 520.17,213.28 520.34,213.28 520.52,213.28 520.70,213.28 520.87,213.28 521.05,213.28 521.22,213.28 521.40,213.28 521.58,213.28 521.75,213.29 521.93,213.29 522.10,213.29 522.28,213.29 522.46,213.29 522.63,213.29 522.81,213.29 522.98,213.29 523.16,213.29 523.34,213.29 523.51,213.29 523.69,213.30 523.86,213.30 524.04,213.30 524.22,213.30 524.39,213.30 524.57,213.30 524.74,213.30 524.92,213.30 525.10,213.30 525.27,213.30 525.45,213.31 525.62,213.31 525.80,213.31 525.98,213.31 526.15,213.31 526.33,213.31 526.50,213.31 526.68,213.31 526.86,213.31 527.03,213.32 527.21,213.32 527.38,213.32 527.56,213.32 527.74,213.32 527.91,213.32 528.09,213.32 528.26,213.32 528.44,213.32 528.62,213.33 528.79,213.33 528.97,213.33 529.14,213.33 529.32,213.33 529.50,213.33 529.67,213.33 529.85,213.33 530.02,213.33 530.20,213.34 530.38,213.34 530.55,213.34 530.73,213.34 530.90,213.34 531.08,213.34 531.26,213.34 531.43,213.35 531.61,213.35 531.78,213.35 531.96,213.35 532.14,213.35 532.31,213.35 532.49,213.35 532.66,213.35 532.84,213.36 533.02,213.36 533.19,213.36 533.37,213.36 533.54,213.36 533.72,213.36 533.90,213.37 534.07,213.37 534.25,213.37 534.42,213.37 534.60,213.37 534.78,213.37 534.95,213.37 535.13,213.38 535.30,213.38 535.48,213.38 535.66,213.38 535.83,213.38 536.01,213.38 536.18,213.39 536.36,213.39 536.54,213.39 536.71,213.39 536.89,213.39 537.06,213.40 537.24,213.40 537.42,213.40 537.59,213.40 537.77,213.40 537.94,213.40 538.12,213.41 538.30,213.41 538.47,213.41 538.65,213.41 538.82,213.41 539.00,213.42 539.18,213.42 539.35,213.42 539.53,213.42 539.70,213.42 539.88,213.43 540.06,213.43 540.23,213.43 540.41,213.43 540.58,213.43 540.76,213.44 540.94,213.44 541.11,213.44 541.29,213.44 541.46,213.44 541.64,213.45 541.82,213.45 541.99,213.45 542.17,213.45 542.34,213.46 542.52,213.46 542.70,213.46 542.87,213.46 543.05,213.46 543.22,213.47 543.40,213.47 543.58,213.47 543.75,213.47 543.93,213.48 544.10,213.48 544.28,213.48 544.46,213.48 544.63,213.48 544.81,213.49 544.98,213.49 545.16,213.49 545.34,213.49 545.51,213.50 545.69,213.50 545.86,213.50 546.04,213.50 546.22,213.51 546.39,213.51 546.57,213.51 546.74,213.51 546.92,213.52 547.10,213.52 547.27,213.52 547.45,213.52 547.62,213.53 547.80,213.53 547.98,213.53 548.15,213.53 548.33,213.54 548.50,213.54 548.68,213.54 548.86,213.54 549.03,213.55 549.21,213.55 549.38,213.55 549.56,213.55 549.74,213.56 549.91,213.56 550.09,213.56 550.26,213.56 550.44,213.57 550.62,213.57 550.79,213.57 550.97,213.58 551.14,213.58 551.32,213.58 551.50,213.58 551.67,213.59 551.85,213.59 552.02,213.59 552.20,213.59 552.38,213.60 552.55,213.60 552.73,213.60 552.90,213.61 553.08,213.61 553.26,213.61 553.43,213.61 553.61,213.62 553.78,213.62 553.96,213.62 554.14,213.63 554.31,213.63 554.49,213.63 554.66,213.64 554.84,213.64 555.02,213.64 555.19,213.64 555.37,213.65 555.54,213.65 555.72,213.65 555.90,213.66 556.07,213.66 556.25,213.66 556.42,213.67 556.60,213.67 556.78,213.67 556.95,213.67 557.13,213.68 557.30,213.68 557.48,213.68 557.66,213.69 557.83,213.69 558.01,213.69 558.18,213.70 558.36,213.70 558.54,213.70 558.71,213.71 558.89,213.71 559.06,213.71 559.24,213.72 559.42,213.72 559.59,213.72 559.77,213.73 559.94,213.73 560.12,213.73 560.30,213.74 560.47,213.74 560.65,213.74 560.82,213.75 561.00,213.75 561.18,213.75 561.35,213.76 561.53,213.76 561.70,213.76 561.88,213.77 562.06,213.77 562.23,213.77 562.41,213.78 562.58,213.78 562.76,213.78 562.94,213.79 563.11,213.79 563.29,213.79 563.46,213.80 563.64,213.80 563.82,213.81 563.99,213.81 564.17,213.81 564.34,213.82 564.52,213.82 564.70,213.82 564.87,213.83 565.05,213.83 565.22,213.84 565.40,213.84 565.58,213.84 565.75,213.85 565.93,213.85 566.10,213.85 566.28,213.86 566.46,213.86 566.63,213.87 566.81,213.87 566.98,213.87 567.16,213.88 567.34,213.88 567.51,213.89 567.69,213.89 567.86,213.90 568.04,213.90 568.22,213.90 568.39,213.91 568.57,213.91 568.74,213.92 568.92,213.92 569.10,213.93 569.27,213.93 569.45,213.93 569.62,213.94 569.80,213.94 569.98,213.95 570.15,213.95 570.33,213.96 570.50,213.96 570.68,213.96 570.86,213.97 571.03,213.97 571.21,213.98 571.38,213.98 571.56,213.99 571.74,213.99 571.91,214.00 572.09,214.00 572.26,214.01 572.44,214.01 572.62,214.01 572.79,214.02 572.97,214.02 573.14,214.03 573.32,214.03 573.50,214.04 573.67,214.04 573.85,214.05 574.02,214.05 574.20,214.06 574.38,214.06 574.55,214.07 574.73,214.07 574.90,214.08 575.08,214.08 575.26,214.09 575.43,214.09 575.61,214.10 575.78,214.10 575.96,214.11 576.14,214.11 576.31,214.12 576.49,214.12 576.66,214.13 576.84,214.13 577.02,214.14 577.19,214.14 577.37,214.15 577.54,214.15 577.72,214.16 577.90,214.16 578.07,214.17 578.25,214.17 578.42,214.18 578.60,214.18 578.78,214.19 578.95,214.19 579.13,214.20 579.30,214.20 579.48,214.21 579.66,214.21 579.83,214.22 580.01,214.23 580.18,214.23 580.36,214.24 580.54,214.24 580.71,214.25 580.89,214.25 581.06,214.26 581.24,214.26 581.42,214.27 581.59,214.27 581.77,214.28 581.94,214.29 582.12,214.29 582.30,214.30 582.47,214.30 582.65,214.31 582.82,214.31 583.00,214.32 583.18,214.33 583.35,214.33 583.53,214.34 583.70,214.34 583.88,214.35 584.06,214.35 584.23,214.36 584.41,214.37 584.58,214.37 584.76,214.38 584.94,214.38 585.11,214.39 585.29,214.39 585.46,214.40 585.64,214.41 585.82,214.41 585.99,214.42 586.17,214.42 586.34,214.43 586.52,214.44 586.70,214.44 586.87,214.45 587.05,214.45 587.22,214.46 587.40,214.47 587.58,214.47 587.75,214.48 587.93,214.48 588.10,214.49 588.28,214.50 588.46,214.50 588.63,214.51 588.81,214.51 588.98,214.52 589.16,214.53 589.34,214.53 589.51,214.54 589.69,214.55 589.86,214.55 590.04,214.56 590.22,214.56 590.39,214.57 590.57,214.58 590.74,214.58 590.92,214.59 591.10,214.60 591.27,214.60 591.45,214.61 591.62,214.62 591.80,214.62 591.98,214.63 592.15,214.63 592.33,214.64 592.50,214.65 592.68,214.65 592.86,214.66 593.03,214.67 593.21,214.67 593.38,214.68 593.56,214.69 593.74,214.69 593.91,214.70 594.09,214.71 594.26,214.71 594.44,214.72 594.62,214.73 594.79,214.73 594.97,214.74 595.14,214.75 595.32,214.75 595.50,214.76 595.67,214.77 595.85,214.77 596.02,214.78 596.20,214.79 596.38,214.79 596.55,214.80 596.73,214.81 596.90,214.81 597.08,214.82 597.26,214.83 597.43,214.83 597.61,214.84 597.78,214.85 597.96,214.86 598.14,214.86 598.31,214.87 598.49,214.88 598.66,214.88 598.84,214.89 599.02,214.90 599.19,214.90 599.37,214.91 599.54,214.92 599.72,214.92 599.90,214.93 600.07,214.94 600.25,214.95 600.42,214.95 600.60,214.96 600.78,214.97 600.95,214.97 601.13,214.98 601.30,214.99 601.48,215.00 601.66,215.00 601.83,215.01 602.01,215.02 602.18,215.02 602.36,215.03 602.54,215.04 602.71,215.05 602.89,215.05 603.06,215.06 603.24,215.07 603.42,215.08 603.59,215.08 603.77,215.09 603.94,215.10 604.12,215.10 604.30,215.11 604.47,215.12 604.65,215.13 604.82,215.13 605.00,215.14 605.18,215.15 605.35,215.16 605.53,215.16 605.70,215.17 605.88,215.18 606.06,215.19 606.23,215.20 606.41,215.20 606.58,215.21 606.76,215.22 606.94,215.23 607.11,215.23 607.29,215.24 607.46,215.25 607.64,215.26 607.82,215.27 607.99,215.28 608.17,215.28 608.34,215.29 608.52,215.30 608.70,215.31 608.87,215.32 609.05,215.33 609.22,215.34 609.40,215.34 609.58,215.35 609.75,215.36 609.93,215.37 610.10,215.38 610.28,215.39 610.46,215.40 610.63,215.41 610.81,215.41 610.98,215.42 611.16,215.43 611.34,215.44 611.51,215.45 611.69,215.46 611.86,215.47 612.04,215.48 612.22,215.49 612.39,215.50 612.57,215.51 612.74,215.52 612.92,215.53 613.10,215.54 613.27,215.54 613.45,215.55 613.62,215.56 613.80,215.57 613.98,215.58 614.15,215.59 614.33,215.60 614.50,215.61 614.68,215.62 614.86,215.63 615.03,215.64 615.21,215.65 615.38,215.66 615.56,215.67 615.74,215.68 615.91,215.69 616.09,215.70 616.26,215.71 616.44,215.72 616.62,215.73 616.79,215.74 616.97,215.75 617.14,215.76 617.32,215.77 617.50,215.78 617.67,215.79 617.85,215.81 618.02,215.82 618.20,215.83 618.38,215.84 618.55,215.85 618.73,215.86 618.90,215.87 619.08,215.88 619.26,215.89 619.43,215.90 619.61,215.91 619.78,215.92 619.96,215.93 620.14,215.94 620.31,215.95 620.49,215.97 620.66,215.98 620.84,215.99 621.02,216.00 621.19,216.01 621.37,216.02 621.54,216.03 621.72,216.04 621.90,216.05 622.07,216.06 622.25,216.08 622.42,216.09 622.60,216.10 622.78,216.11 622.95,216.12 623.13,216.13 623.30,216.14 623.48,216.15 623.66,216.17 623.83,216.18 624.01,216.19 624.18,216.20 624.36,216.21 624.54,216.22 624.71,216.23 624.89,216.25 625.06,216.26 625.24,216.27 625.42,216.28 625.59,216.29 625.77,216.30 625.94,216.32 626.12,216.33 626.30,216.34 626.47,216.35 626.65,216.36 626.82,216.37 627.00,216.39 627.18,216.40 627.35,216.41 627.53,216.42 627.70,216.43 627.88,216.44 628.06,216.46 628.23,216.47 628.41,216.48 628.58,216.49 628.76,216.50 628.94,216.52 629.11,216.53 629.29,216.54 629.46,216.55 629.64,216.56 629.82,216.58 629.99,216.59 630.17,216.60 630.34,216.61 630.52,216.62 630.70,216.64 630.87,216.65 631.05,216.66 631.22,216.67 631.40,216.68 631.58,216.70 631.75,216.71 631.93,216.72 632.10,216.73 632.28,216.74 632.46,216.76 632.63,216.77 632.81,216.78 632.98,216.79 633.16,216.81 633.34,216.82 633.51,216.83 633.69,216.84 633.86,216.85 634.04,216.87 634.22,216.88 634.39,216.89 634.57,216.90 634.74,216.92 634.92,216.93 635.10,216.94 635.27,216.95 635.45,216.97 635.62,216.98 635.80,216.99 635.98,217.00 636.15,217.01 636.33,217.03 636.50,217.04 636.68,217.05 636.86,217.06 637.03,217.08 637.21,217.09 637.38,217.10 637.56,217.11 637.74,217.13 637.91,217.14 638.09,217.15 638.26,217.16 638.44,217.17 638.62,217.19 638.79,217.20 638.97,217.21 639.14,217.22 639.32,217.24 639.50,217.25 639.67,217.26 639.85,217.27 640.02,217.29 640.20,217.30 640.38,217.31 640.55,217.32 640.73,217.33 640.90,217.35 641.08,217.36 641.26,217.37 641.43,217.38 641.61,217.40 641.78,217.41 641.96,217.42 642.14,217.43 642.31,217.44 642.49,217.46 642.66,217.47 642.84,217.48 643.02,217.49 643.19,217.51 643.37,217.52 643.54,217.53 643.72,217.54 643.90,217.55 644.07,217.57 644.25,217.58 644.42,217.59 644.60,217.60 644.78,217.62 644.95,217.63 645.13,217.64 645.30,217.65 645.48,217.66 645.66,217.68 645.83,217.69 646.01,217.70 646.18,217.71 646.36,217.72 646.54,217.74 646.71,217.75 646.89,217.76 647.06,217.77 647.24,217.78 647.42,217.80 647.59,217.81 647.77,217.82 647.94,217.83 648.12,217.84 648.30,217.86 648.47,217.87 648.65,217.88 648.82,217.89 649.00,217.90 649.18,217.91 649.35,217.93 649.53,217.94 649.70,217.95 649.88,217.96 650.06,217.97 650.23,217.99 650.41,218.00 650.58,218.01 650.76,218.02 650.94,218.03 651.11,218.05 651.29,218.06 651.46,218.07 651.64,218.08 651.82,218.09 651.99,218.11 652.17,218.12 652.34,218.13 652.52,218.14 652.70,218.15 652.87,218.16 653.05,218.18 653.22,218.19 653.40,218.20 653.58,218.21 653.75,218.22 653.93,218.24 654.10,218.25 654.28,218.26 654.46,218.27 654.63,218.28 654.81,218.30 654.98,218.31 655.16,218.32 655.34,218.33 655.51,218.34 655.69,218.36 655.86,218.37 656.04,218.38 656.22,218.39 656.39,218.40 656.57,218.42 656.74,218.43 656.92,218.44 657.10,218.45 657.27,218.46 657.45,218.47 657.62,218.49 657.80,218.50 657.98,218.51 658.15,218.52 658.33,218.53 658.50,218.55 658.68,218.56 658.86,218.57 659.03,218.58 659.21,218.59 659.38,218.61 659.56,218.62 659.74,218.63 659.91,218.64 660.09,218.66 660.26,218.67 660.44,218.68 660.62,218.69 660.79,218.70 660.97,218.72 661.14,218.73 661.32,218.74 661.50,218.75 661.67,218.76 661.85,218.78 662.02,218.79 662.20,218.80 662.38,218.81 662.55,218.82 662.73,218.84 662.90,218.85 663.08,218.86 663.26,218.87 663.43,218.89 663.61,218.90 663.78,218.91 663.96,218.92 664.14,218.94 664.31,218.95 664.49,218.96 664.66,218.97 664.84,218.98 665.02,219.00 665.19,219.01 665.37,219.02 665.54,219.03 665.72,219.05 665.90,219.06 666.07,219.07 666.25,219.08 666.42,219.10 666.60,219.11 666.78,219.12 666.95,219.13 667.13,219.15 667.30,219.16 667.48,219.17 667.66,219.18 667.83,219.20 668.01,219.21 668.18,219.22 668.36,219.23 668.54,219.25 668.71,219.26 668.89,219.27 669.06,219.28 669.24,219.30 669.42,219.31 669.59,219.32 669.77,219.34 669.94,219.35 670.12,219.36 670.30,219.37 670.47,219.39 670.65,219.40 670.82,219.41 671.00,219.43 671.18,219.44 671.35,219.45 671.53,219.46 671.70,219.48 671.88,219.49 672.06,219.50 672.23,219.52 672.41,219.53 672.58,219.54 672.76,219.56 672.94,219.57 673.11,219.58 673.29,219.59 673.46,219.61 673.64,219.62 673.82,219.63 673.99,219.65 674.17,219.66 674.34,219.67 674.52,219.69 674.70,219.70 674.87,219.71 675.05,219.73 675.22,219.74 675.40,219.75 675.58,219.77 675.75,219.78 675.93,219.80 676.10,219.81 676.28,219.82 676.46,219.84 676.63,219.85 676.81,219.86 676.98,219.88 677.16,219.89 677.34,219.90 677.51,219.92 677.69,219.93 677.86,219.95 678.04,219.96 678.22,219.97 678.39,219.99 678.57,220.00 678.74,220.01 678.92,220.03 679.10,220.04 679.27,220.06 679.45,220.07 679.62,220.08 679.80,220.10 679.98,220.11 680.15,220.13 680.33,220.14 680.50,220.16 680.68,220.17 680.86,220.18 681.03,220.20 681.21,220.21 681.38,220.23 681.56,220.24 681.74,220.26 681.91,220.27 682.09,220.28 682.26,220.30 682.44,220.31 682.62,220.33 682.79,220.34 682.97,220.36 683.14,220.37 683.32,220.39 683.50,220.40 683.67,220.42 683.85,220.43 684.02,220.45 684.20,220.46 684.38,220.48 684.55,220.49 684.73,220.51 684.90,220.52 685.08,220.54 685.26,220.55 685.43,220.57 685.61,220.58 685.78,220.60 685.96,220.61 686.14,220.63 686.31,220.64 686.49,220.66 686.66,220.67 686.84,220.69 687.02,220.71 687.19,220.72 687.37,220.74 687.54,220.75 687.72,220.77 687.90,220.78 688.07,220.80 688.25,220.81 688.42,220.83 688.60,220.85 688.78,220.86 688.95,220.88 689.13,220.89 689.30,220.91 689.48,220.93 689.66,220.94 689.83,220.96 690.01,220.97 690.18,220.99 690.36,221.01 690.54,221.02 690.71,221.04 690.89,221.06 691.06,221.07 691.24,221.09 691.42,221.11 691.59,221.12 691.77,221.14 691.94,221.16 692.12,221.17 692.30,221.19 692.47,221.21 692.65,221.22 692.82,221.24 693.00,221.26 693.18,221.27 693.35,221.29 693.53,221.31 693.70,221.33 693.88,221.34 694.06,221.36 694.23,221.38 694.41,221.40 694.58,221.41 694.76,221.43 694.94,221.45 695.11,221.47 695.29,221.48 695.46,221.50 695.64,221.52 695.82,221.54 695.99,221.55 696.17,221.57 696.34,221.59 696.52,221.61 696.70,221.63 696.87,221.65 697.05,221.66 697.22,221.68 697.40,221.70 697.58,221.72 697.75,221.74 697.93,221.76 698.10,221.78 698.28,221.79 698.46,221.81 698.63,221.83 698.81,221.85 698.98,221.87 699.16,221.89 699.34,221.91 699.51,221.93 699.69,221.95 699.86,221.96 700.04,221.98 700.22,222.00 700.39,222.02 700.57,222.04 700.74,222.06 700.92,222.08 701.10,222.10 701.27,222.12 701.45,222.14 701.62,222.16 701.80,222.18 701.98,222.20 702.15,222.22 702.33,222.24 702.50,222.26 702.68,222.28 702.86,222.30 703.03,222.32 703.21,222.34 703.38,222.36 703.56,222.38 703.74,222.40 703.91,222.42 704.09,222.44 704.26,222.46 704.44,222.49 704.62,222.51 704.79,222.53 704.97,222.55 705.14,222.57 705.32,222.59 705.50,222.61 705.67,222.63 705.85,222.65 706.02,222.67 706.20,222.70 706.38,222.72 706.55,222.74 706.73,222.76 706.90,222.78 707.08,222.80 707.26,222.82 707.43,222.85 707.61,222.87 707.78,222.89 707.96,222.91 708.14,222.93 708.31,222.96 708.49,222.98 708.66,223.00 708.84,223.02 709.02,223.04 709.19,223.07 709.37,223.09 709.54,223.11 709.72,223.13 709.90,223.16 710.07,223.18 710.25,223.20 710.42,223.22 710.60,223.25 710.78,223.27 710.95,223.29 711.13,223.32 711.30,223.34 711.48,223.36 711.66,223.38 711.83,223.41 712.01,223.43 712.18,223.45 712.36,223.48 712.54,223.50 712.71,223.52 712.89,223.55 713.06,223.57 713.24,223.60 713.42,223.62 713.59,223.64 713.77,223.67 713.94,223.69 714.12,223.71 714.30,223.74 714.47,223.76 714.65,223.79 714.82,223.81 715.00,223.84 715.18,223.86 715.35,223.88 715.53,223.91 715.70,223.93 715.88,223.96 716.06,223.98 716.23,224.01 716.41,224.03 716.58,224.06 716.76,224.08 716.94,224.11 717.11,224.13 717.29,224.16 717.46,224.18 717.64,224.21 717.82,224.23 717.99,224.26 718.17,224.28 718.34,224.31 718.52,224.33 718.70,224.36 718.87,224.38 719.05,224.41 719.22,224.43 719.40,224.46 719.58,224.49 719.75,224.51 719.93,224.54 720.10,224.56 720.28,224.59 720.46,224.62 720.63,224.64 720.81,224.67 720.98,224.70 721.16,224.72 721.34,224.75 721.51,224.78 721.69,224.80 721.86,224.83 722.04,224.86 722.22,224.89 722.39,224.91 722.57,224.94 722.74,224.97 722.92,225.00 723.10,225.02 723.27,225.05 723.45,225.08 723.62,225.11 723.80,225.14 723.98,225.16 724.15,225.19 724.33,225.22 724.50,225.25 724.68,225.28 724.86,225.31 725.03,225.34 725.21,225.36 725.38,225.39 725.56,225.42 725.74,225.45 725.91,225.48 726.09,225.51 726.26,225.54 726.44,225.57 726.62,225.60 726.79,225.63 726.97,225.66 727.14,225.69 727.32,225.72 727.50,225.75 727.67,225.78 727.85,225.81 728.02,225.84 728.20,225.87 728.38,225.90 728.55,225.93 728.73,225.96 728.90,225.99 729.08,226.02 729.26,226.05 729.43,226.09 729.61,226.12 729.78,226.15 729.96,226.18 730.14,226.21 730.31,226.24 730.49,226.27 730.66,226.31 730.84,226.34 731.02,226.37 731.19,226.40 731.37,226.43 731.54,226.47 731.72,226.50 731.90,226.53 732.07,226.56 732.25,226.59 732.42,226.63 732.60,226.66 732.78,226.69 732.95,226.73 733.13,226.76 733.30,226.79 733.48,226.82 733.66,226.86 733.83,226.89 734.01,226.92 734.18,226.96 734.36,226.99 734.54,227.02 734.71,227.06 734.89,227.09 735.06,227.13 735.24,227.16 735.42,227.19 735.59,227.23 735.77,227.26 735.94,227.30 736.12,227.33 736.30,227.37 736.47,227.40 736.65,227.43 736.82,227.47 737.00,227.50 737.18,227.54 737.35,227.57 737.53,227.61 737.70,227.64 737.88,227.68 738.06,227.71 738.23,227.75 738.41,227.79 738.58,227.82 738.76,227.86 738.94,227.89 739.11,227.93 739.29,227.96 739.46,228.00 739.64,228.04 739.82,228.07 739.99,228.11 740.17,228.14 740.34,228.18 740.52,228.22 740.70,228.25 740.87,228.29 741.05,228.33 741.22,228.36 741.40,228.40 741.58,228.44 741.75,228.47 741.93,228.51 742.10,228.55 742.28,228.58 742.46,228.62 742.63,228.66 742.81,228.70 742.98,228.73 743.16,228.77 743.34,228.81 743.51,228.85 743.69,228.88 743.86,228.92 744.04,228.96 744.22,229.00 744.39,229.04 744.57,229.07 744.74,229.11 744.92,229.15 745.10,229.19 745.27,229.23 745.45,229.27 745.62,229.31 745.80,229.34 745.98,229.38 746.15,229.42 746.33,229.46 746.50,229.50 746.68,229.54 746.86,229.58 747.03,229.62 747.21,229.66 747.38,229.70 747.56,229.73 747.74,229.77 747.91,229.81 748.09,229.85 748.26,229.89 748.44,229.93 748.62,229.97 748.79,230.01 748.97,230.05 749.14,230.09 749.32,230.13 749.50,230.17 749.67,230.21 749.85,230.25 750.02,230.29 750.20,230.33 750.38,230.37 750.55,230.41 750.73,230.45 750.90,230.50 751.08,230.54 751.26,230.58 751.43,230.62 751.61,230.66 751.78,230.70 751.96,230.74 752.14,230.78 752.31,230.82 752.49,230.86 752.66,230.91 752.84,230.95 753.02,230.99 753.19,231.03 753.37,231.07 753.54,231.11 753.72,231.15 753.90,231.20 754.07,231.24 754.25,231.28 754.42,231.32 754.60,231.36 754.78,231.41 754.95,231.45 755.13,231.49 755.30,231.53 755.48,231.57 755.66,231.62 755.83,231.66 756.01,231.70 756.18,231.74 756.36,231.79 756.54,231.83 756.71,231.87 756.89,231.91 757.06,231.96 757.24,232.00 757.42,232.04 757.59,232.09 757.77,232.13 757.94,232.17 758.12,232.21 758.30,232.26 758.47,232.30 758.65,232.34 758.82,232.39 759.00,232.43 759.18,232.47 759.35,232.52 759.53,232.56 759.70,232.61 759.88,232.65 760.06,232.69 760.23,232.74 760.41,232.78 760.58,232.83 760.76,232.87 760.94,232.91 761.11,232.96 761.29,233.00 761.46,233.05 761.64,233.09 761.82,233.14 761.99,233.18 762.17,233.23 762.34,233.27 762.52,233.32 762.70,233.36 762.87,233.41 763.05,233.46 763.22,233.50 763.40,233.55 763.58,233.59 763.75,233.64 763.93,233.69 764.10,233.73 764.28,233.78 764.46,233.82 764.63,233.87 764.81,233.92 764.98,233.96 765.16,234.01 765.34,234.06 765.51,234.10 765.69,234.15 765.86,234.20 766.04,234.25 766.22,234.29 766.39,234.34 766.57,234.39 766.74,234.44 766.92,234.48 767.10,234.53 767.27,234.58 767.45,234.63 767.62,234.68 767.80,234.73 767.98,234.77 768.15,234.82 768.33,234.87 768.50,234.92 768.68,234.97 768.86,235.02 769.03,235.07 769.21,235.12 769.38,235.17 769.56,235.22 769.74,235.27 769.91,235.32 770.09,235.37 770.26,235.42 770.44,235.47 770.62,235.52 770.79,235.57 770.97,235.62 771.14,235.67 771.32,235.72 771.50,235.77 771.67,235.82 771.85,235.87 772.02,235.92 772.20,235.98 772.38,236.03 772.55,236.08 772.73,236.13 772.90,236.18 773.08,236.23 773.26,236.29 773.43,236.34 773.61,236.39 773.78,236.44 773.96,236.50 774.14,236.55 774.31,236.60 774.49,236.66 774.66,236.71 774.84,236.76 775.02,236.82 775.19,236.87 775.37,236.92 775.54,236.98 775.72,237.03 775.90,237.09 776.07,237.14 776.25,237.19 776.42,237.25 776.60,237.30 776.78,237.36 776.95,237.41 777.13,237.47 777.30,237.53 777.48,237.58 777.66,237.64 777.83,237.69 778.01,237.75 778.18,237.80 778.36,237.86 778.54,237.92 778.71,237.97 778.89,238.03 779.06,238.09 779.24,238.15 779.42,238.20 779.59,238.26 779.77,238.32 779.94,238.38 780.12,238.43 780.30,238.49 780.47,238.55 780.65,238.61 780.82,238.67 781.00,238.73 781.18,238.78 781.35,238.84 781.53,238.90 781.70,238.96 781.88,239.02 782.06,239.08 782.23,239.14 782.41,239.20 782.58,239.26 782.76,239.32 782.94,239.38 783.11,239.44 783.29,239.50 783.46,239.57 783.64,239.63 783.82,239.69 783.99,239.75 784.17,239.81 784.34,239.87 784.52,239.94 784.70,240.00 784.87,240.06 785.05,240.12 785.22,240.19 785.40,240.25 785.58,240.31 785.75,240.38 785.93,240.44 786.10,240.51 786.28,240.57 786.46,240.64 786.63,240.70 786.81,240.76 786.98,240.83 787.16,240.89 787.34,240.96 787.51,241.03 787.69,241.09 787.86,241.16 788.04,241.22 788.22,241.29 788.39,241.36 788.57,241.42 788.74,241.49 788.92,241.56 789.10,241.63 789.27,241.69 789.45,241.76 789.62,241.83 789.80,241.90 789.98,241.97 790.15,242.04 790.33,242.11 790.50,242.18 790.68,242.25 790.86,242.32 791.03,242.39 791.21,242.46 791.38,242.53 791.56,242.60 791.74,242.67 791.91,242.74 792.09,242.81 792.26,242.88 792.44,242.96 792.62,243.03 792.79,243.10 792.97,243.17 793.14,243.25 793.32,243.32 793.50,243.39 793.67,243.47 793.85,243.54 794.02,243.62 794.20,243.69 794.38,243.77 794.55,243.84 794.73,243.92 794.90,243.99 795.08,244.07 795.26,244.15 795.43,244.22 795.61,244.30 795.78,244.38 795.96,244.45 796.14,244.53 796.31,244.61 796.49,244.69 796.66,244.77 796.84,244.85 797.02,244.92 797.19,245.00 797.37,245.08 797.54,245.16 797.72,245.25 797.90,245.33 798.07,245.41 798.25,245.49 798.42,245.57 798.60,245.66 798.78,245.74 798.95,245.82 799.13,245.91 799.30,245.99 799.48,246.07 799.66,246.16 799.83,246.25 800.01,246.33 800.18,246.42 800.36,246.50 800.54,246.59 800.71,246.68 800.89,246.77 801.06,246.86 801.24,246.94 801.42,247.03 801.59,247.12 801.77,247.21 801.94,247.30 802.12,247.39 802.30,247.49 802.47,247.58 802.65,247.67 802.82,247.76 803.00,247.86 803.18,247.95 803.35,248.04 803.53,248.14 803.70,248.23 803.88,248.33 804.06,248.42 804.23,248.52 804.41,248.62 804.58,248.71 804.76,248.81 804.94,248.91 805.11,249.01 805.29,249.11 805.46,249.21 805.64,249.31 805.82,249.41 805.99,249.51 806.17,249.61 806.34,249.71 806.52,249.81 806.70,249.92 806.87,250.02 807.05,250.12 807.22,250.23 807.40,250.33 807.58,250.44 807.75,250.54 807.93,250.65 808.10,250.75 808.28,250.86 808.46,250.97 808.63,251.08 808.81,251.18 808.98,251.29 809.16,251.40 809.34,251.51 809.51,251.62 809.69,251.73 809.86,251.85 810.04,251.96 810.22,252.07 810.39,252.18 810.57,252.30 810.74,252.41 810.92,252.53 811.10,252.64 811.27,252.76 811.45,252.87 811.62,252.99 811.80,253.11 811.98,253.23 812.15,253.34 812.33,253.46 812.50,253.58 812.68,253.70 812.86,253.82 813.03,253.94 813.21,254.07 813.38,254.19 813.56,254.31 813.74,254.43 813.91,254.56 814.09,254.68 814.26,254.81 814.44,254.93 814.62,255.06 814.79,255.19 814.97,255.31 815.14,255.44 815.32,255.57 815.50,255.70 815.67,255.83 815.85,255.96 816.02,256.09 816.20,256.22 816.38,256.36 816.55,256.49 816.73,256.62 816.90,256.76 817.08,256.89 817.26,257.03 817.43,257.17 817.61,257.30 817.78,257.44 817.96,257.58 818.14,257.72 818.31,257.86 818.49,258.00 818.66,258.14 818.84,258.28 819.02,258.43 819.19,258.57 819.37,258.72 819.54,258.86 819.72,259.01 819.90,259.15 820.07,259.30 820.25,259.45 820.42,259.60 820.60,259.75 820.78,259.91 820.95,260.06 821.13,260.21 821.30,260.37 821.48,260.52 821.66,260.68 821.83,260.84 822.01,261.00 822.18,261.15 822.36,261.32 822.54,261.48 822.71,261.64 822.89,261.80 823.06,261.97 823.24,262.14 823.42,262.30 823.59,262.47 823.77,262.64 823.94,262.81 824.12,262.98 824.30,263.16 824.47,263.33 824.65,263.51 824.82,263.69 825.00,263.86 825.18,264.04 825.35,264.23 825.53,264.41 825.70,264.59 825.88,264.78 826.06,264.97 826.23,265.15 826.41,265.34 826.58,265.54 826.76,265.73 826.94,265.92 827.11,266.12 827.29,266.32 827.46,266.52 827.64,266.72 827.82,266.92 827.99,267.13 828.17,267.33 828.34,267.54 828.52,267.75 828.70,267.97 828.87,268.18 829.05,268.40 829.22,268.61 829.40,268.84 829.58,269.06 829.75,269.28 829.93,269.51 830.10,269.74 830.28,269.97 830.46,270.20 830.63,270.44 830.81,270.68 830.98,270.92 831.16,271.16 831.34,271.41 831.51,271.66 831.69,271.91 831.86,272.17 832.04,272.42 832.22,272.68 832.39,272.95 832.57,273.21 832.74,273.48 832.92,273.76 833.10,274.03 833.27,274.31 833.45,274.59 833.62,274.88 833.80,275.17 833.98,275.46 834.15,275.76 834.33,276.06 834.50,276.38 834.68,276.70 834.86,277.04 835.03,277.39 835.21,277.74 835.38,278.11 835.56,278.50 835.74,278.89 835.91,279.29 836.09,279.70 836.26,280.13 836.44,280.56 836.62,281.00 836.79,281.45 836.97,281.91 837.14,282.38 837.32,282.86 837.50,283.34 837.67,283.83 837.85,284.33 838.02,284.84 838.20,285.35 838.38,285.86 838.55,286.38 838.73,286.91 838.90,287.43 839.08,287.96 839.26,288.49 839.43,289.01 839.61,289.54 839.78,290.06 839.96,290.57 840.14,291.08 840.31,291.58 840.49,292.07 840.66,292.55 840.84,293.02 841.02,293.47 841.19,293.90 841.37,294.31 841.54,294.69 841.72,295.06 841.90,295.39 842.07,295.70 842.25,296.00 842.42,296.31 842.60,296.62 842.78,296.93 842.95,297.24 843.13,297.55 843.30,297.86 843.48,298.18 843.66,298.49 843.83,298.80 844.01,299.11 844.18,299.42 844.36,299.72 844.54,300.02 844.71,300.32 844.89,300.61 845.06,300.90 845.24,301.18 845.42,301.45 845.59,301.72 845.77,301.97 845.94,302.22 846.12,302.45 846.30,302.67 846.47,302.88 846.65,303.08 846.82,303.26 847.00,303.43 847.18,303.58 847.35,303.72 847.53,303.83 847.70,303.93 847.88,304.01 848.06,304.06 848.23,304.10 848.41,304.11 848.58,304.03 848.76,303.75 848.94,303.29 849.11,302.69 849.29,301.97 849.46,301.17 849.64,300.31 849.82,299.42 849.99,298.51 850.17,297.61 850.34,296.74 850.52,295.90 850.70,295.11 850.87,294.38 851.05,293.73 851.22,293.15 851.40,292.66 851.58,292.21 851.75,291.78 851.93,291.37 852.10,290.97 852.28,290.59 852.46,290.23 852.63,289.88 852.81,289.54 852.98,289.20 853.16,288.88 853.34,288.56 853.51,288.25 853.69,287.94 853.86,287.64 854.04,287.34 854.22,287.04 854.39,286.74 854.57,286.44 854.74,286.14 854.92,285.84 855.10,285.54 855.27,285.23 855.45,284.92 855.62,284.60 855.80,284.28 855.98,283.96 856.15,283.64 856.33,283.31 856.50,282.99 856.68,282.66 856.86,282.33 857.03,282.01 857.21,281.69 857.38,281.36 857.56,281.04 857.74,280.72 857.91,280.40 858.09,280.08 858.26,279.76 858.44,279.45 858.62,279.14 858.79,278.83 858.97,278.52 859.14,278.21 859.32,277.91 859.50,277.61 859.67,277.31 859.85,277.01 860.02,276.72 860.20,276.43 860.38,276.14 860.55,275.86 860.73,275.58 860.90,275.30 861.08,275.03 861.26,274.76 861.43,274.49 861.61,274.23 861.78,273.96 861.96,273.70 862.14,273.44 862.31,273.19 862.49,272.93 862.66,272.68 862.84,272.42 863.02,272.18 863.19,271.93 863.37,271.68 863.54,271.44 863.72,271.19 863.90,270.95 864.07,270.71 864.25,270.48 864.42,270.24 864.60,270.00 864.78,269.77 864.95,269.54 865.13,269.31 865.30,269.08 865.48,268.85 865.66,268.63 865.83,268.40 866.01,268.18 866.18,267.96 866.36,267.74 866.54,267.52 866.71,267.30 866.89,267.09 867.06,266.87 867.24,266.66 867.42,266.45 867.59,266.23 867.77,266.02 867.94,265.82 868.12,265.61 868.30,265.40 868.47,265.20 868.65,264.99 868.82,264.79 869.00,264.59" stroke="#00ffff" fill="none" stroke-width="1" shape-rendering="crispEdges"/><polygon points="516.3822055137845,213.262926 519.3822055137845,213.262926 522.3822055137845,225.762926 513.3822055137845,225.762926" stroke="#00ffff" fill="none" stroke-width="1" shape-rendering="crispEdges"/><text x="513.882" y="236.262926" fill="#00ffff" font-size="13.333" style="white-space:pre">1</text><polygon points="523.4398496240601,213.302266 526.4398496240601,213.302266 529.4398496240601,225.802266 520.4398496240601,225.802266" stroke="#00ffff" fill="none" stroke-width="1" shape-rendering="crispEdges"/><text x="520.94" y="236.302266" fill="#00ffff" font-size="13.333" style="white-space:pre">2</text><polygon points="532.2619047619048,213.36408600000001 535.2619047619048,213.36408600000001 538.2619047619048,225.86408600000001 529.2619047619048,225.86408600000001" stroke="#00ffff" fill="none" stroke-width="1" shape-rendering="crispEdges"/><text x="529.762" y="236.36408600000001" fill="#00ffff" font-size="13.333" style="white-space:pre">3</text><polygon points="558.7280701754386,213.733882 561.7280701754386,213.733882 564.7280701754386,226.233882 555.7280701754386,226.233882" stroke="#00ffff" fill="none" stroke-width="1" shape-rendering="crispEdges"/><text x="556.228" y="236.733882" fill="#00ffff" font-size="13.333" style="white-space:pre">4</text><polygon points="602.8383458646616,215.113311 605.8383458646616,215.113311 608.8383458646616,227.613311 599.8383458646616,227.613311" stroke="#00ffff" fill="none" stroke-width="1" shape-rendering="crispEdges"/><text x="600.338" y="238.113311" fill="#00ffff" font-size="13.333" style="white-space:pre">5</text><polygon points="691.0588972431078,221.214664 694.0588972431078,221.214664 697.0588972431078,233.714664 688.0588972431078,233.714664" stroke="#00ffff" fill="none" stroke-width="1" shape-rendering="crispEdges"/><text x="688.559" y="244.214664" fill="#00ffff" font-size="13.333" style="white-space:pre">6</text><polygon points="867.5,264.58589 870.5,264.58589 873.5,277.08589 864.5,277.08589" stroke="#00ffff" fill="none" stroke-width="1" shape-rendering="crispEdges"/><text x="865" y="287.58589" fill="#00ffff" font-size="13.333" style="white-space:pre">7</text><polygon points="847.9323841604009,304.11415999999997 848.9323841604009,304.11415999999997 852.9323841604009,290.61415999999997 843.9323841604009,290.61415999999997" stroke="#00ffff" fill="none" stroke-width="1" shape-rendering="crispEdges"/><text x="844.932" y="287.11415999999997" fill="#00ffff" font-size="13.333" style="white-space:pre">8</text><polygon points="509,205.0 517,212.5 509,220.0" fill="#00ffff"/><polygon points="877,205.0 869,212.5 877,220.0" fill="#00ffff"/><text x="870" y="267" fill="#00ffff" font-size="13.333" style="white-space:pre">2</text><polygon points="517.8822055137845,354 524.8822055137845,361 510.88220551378447,361" stroke="#00ffff" fill="none" stroke-width="1" shape-rendering="crispEdges"/><polygon points="524.9398496240601,354 531.9398496240601,361 517.9398496240601,361" stroke="#00ffff" fill="none" stroke-width="1" shape-rendering="crispEdges"/><polygon points="533.7619047619048,354 540.7619047619048,361 526.7619047619048,361" stroke="#00ffff" fill="none" stroke-width="1" shape-rendering="crispEdges"/><polygon points="560.2280701754386,354 567.2280701754386,361 553.2280701754386,361" stroke="#00ffff" fill="none" stroke-width="1" shape-rendering="crispEdges"/><polygon points="604.3383458646616,354 611.3383458646616,361 597.3383458646616,361" stroke="#00ffff" fill="none" stroke-width="1" shape-rendering="crispEdges"/><polygon points="692.5588972431078,354 699.5588972431078,361 685.5588972431078,361" stroke="#00ffff" fill="none" stroke-width="1" shape-rendering="crispEdges"/><polygon points="869.0,354 876.0,361 862.0,361" stroke="#00ffff" fill="none" stroke-width="1" shape-rendering="crispEdges"/><polygon points="848.4323841604009,354 855.4323841604009,361 841.4323841604009,361" stroke="#00ffff" fill="#00ffff" stroke-width="1" shape-rendering="crispEdges"/><polygon points="444,48 450,54 444,60" fill="#00ffff"/><rect x="453" y="48" width="25" height="13" fill="#00ffff"/><text x="453 461 469" y="58" fill="#000000" font-size="13.333" style="white-space:pre">Tr2</text><text x="485 493 501 509 517 525 533 541 549 557 565 573 581 589.4 597 605.4 613.4 621 629 637 645 653 661 669 677 685.4 693 701.4 709.4 717.4 725 733 741 749 757 765 773 781 789 797 805" y="58" fill="#00ffff" font-size="13.333" style="white-space:pre">S43 Log Mag 1<tspan font-family="Liberation Sans" font-size="13">0</tspan>.<tspan font-family="Liberation Sans" font-size="13">00</tspan>dB/ Ref <tspan font-family="Liberation Sans" font-size="13">0</tspan>.<tspan font-family="Liberation Sans" font-size="13">000</tspan>dB [F2 Smo]</text><text x="519.5 527.5 535.5 543.5 551.5 559.9 567.9 575.5 583.9 591.9 599.9 607.9 615.9 623.5 631.5 639.5 647.5 655.5 663.5 671.9 679.5 687.9 695.9 703.5 711.5 719.5 727.5 735.5" y="84" fill="#00ffff" font-size="13.333" style="white-space:pre"> 1  1<tspan font-family="Liberation Sans" font-size="13">00</tspan>.<tspan font-family="Liberation Sans" font-size="13">00000</tspan> MHz -<tspan font-family="Liberation Sans" font-size="13">0</tspan>.<tspan font-family="Liberation Sans" font-size="13">00</tspan>46 dB</text><text x="519.5 527.5 535.5 543.5 551.5 559.9 567.9 575.5 583.9 591.9 599.9 607.9 615.9 623.5 631.5 639.5 647.5 655.5 663.5 671.9 679.5 687.9 695.5 703.5 711.5 719.5 727.5 735.5" y="97" fill="#00ffff" font-size="13.333" style="white-space:pre"> 2  5<tspan font-family="Liberation Sans" font-size="13">00</tspan>.<tspan font-family="Liberation Sans" font-size="13">00000</tspan> MHz -<tspan font-family="Liberation Sans" font-size="13">0</tspan>.<tspan font-family="Liberation Sans" font-size="13">0</tspan>186 dB</text><text x="519.5 527.5 535.5 543.5 551.5 559.5 567.9 575.9 583.9 591.9 599.9 607.9 615.9 623.5 631.5 639.5 647.5 655.5 663.5 671.9 679.5 687.9 695.5 703.9 711.5 719.5 727.5 735.5" y="110" fill="#00ffff" font-size="13.333" style="white-space:pre"> 3  1.<tspan font-family="Liberation Sans" font-size="13">0000000</tspan> GHz -<tspan font-family="Liberation Sans" font-size="13">0</tspan>.<tspan font-family="Liberation Sans" font-size="13">0</tspan>4<tspan font-family="Liberation Sans" font-size="13">0</tspan>6 dB</text><text x="519.5 527.5 535.5 543.5 551.5 559.5 567.5 575.9 583.9 591.9 599.9 607.9 615.9 623.5 631.5 639.5 647.5 655.5 663.5 671.9 679.5 687.5 695.5 703.5 711.5 719.5 727.5 735.5" y="123" fill="#00ffff" font-size="13.333" style="white-space:pre"> 4  2.5<tspan font-family="Liberation Sans" font-size="13">000000</tspan> GHz -<tspan font-family="Liberation Sans" font-size="13">0</tspan>.1722 dB</text><text x="519.5 527.5 535.5 543.5 551.5 559.5 567.9 575.9 583.9 591.9 599.9 607.9 615.9 623.5 631.5 639.5 647.5 655.5 663.5 671.9 679.5 687.5 695.5 703.5 711.5 719.5 727.5 735.5" y="136" fill="#00ffff" font-size="13.333" style="white-space:pre"> 5  5.<tspan font-family="Liberation Sans" font-size="13">0000000</tspan> GHz -<tspan font-family="Liberation Sans" font-size="13">0</tspan>.6631 dB</text><text x="519.5 527.5 535.5 543.5 551.5 559.9 567.5 575.9 583.9 591.9 599.9 607.9 615.9 623.5 631.5 639.5 647.5 655.5 663.5 671.5 679.5 687.5 695.5 703.5 711.5 719.5 727.5 735.5" y="149" fill="#00ffff" font-size="13.333" style="white-space:pre"> 6  1<tspan font-family="Liberation Sans" font-size="13">0</tspan>.<tspan font-family="Liberation Sans" font-size="13">000000</tspan> GHz -2.8344 dB</text><text x="519.5 527.5 535.5 543.5 551.5 559.9 567.5 575.9 583.9 591.9 599.9 607.9 615.9 623.5 631.5 639.5 647.5 655.5 663.5 671.5 679.5 687.5 695.5 703.5 711.5 719.5 727.5 735.5" y="162" fill="#00ffff" font-size="13.333" style="white-space:pre"> 7  2<tspan font-family="Liberation Sans" font-size="13">0</tspan>.<tspan font-family="Liberation Sans" font-size="13">000000</tspan> GHz -18.269 dB</text><text x="519.5 527.5 535.5 543.5 551.5 559.5 567.5 575.5 583.5 591.5 599.5 607.9 615.5 623.5 631.5 639.5 647.5 655.5 663.5 671.5 679.5 687.5 695.5 703.5 711.5 719.5 727.5 735.5" y="175" fill="#00ffff" font-size="13.333" style="white-space:pre">&gt;8  18.8343<tspan font-family="Liberation Sans" font-size="13">0</tspan>7 GHz -32.336 dB</text><path d="M552.5 390V672M587.5 390V672M622.5 390V672M657.5 390V672M693.5 390V672M728.5 390V672M763.5 390V672M798.5 390V672M833.5 390V672M517 418.5H869M517 446.5H869M517 474.5H869M517 502.5H869M517 531.5H869M517 559.5H869M517 587.5H869M517 615.5H869M517 643.5H869" stroke="#3c3c3c" stroke-width="1" fill="none"/><rect x="517.5" y="390.5" width="352" height="282" stroke="#a8a8a8" stroke-width="1" fill="none"/><text x="466 474 482.4 490.4 498.4" y="394" fill="#c4c4c4" font-size="13.333" style="white-space:pre">1.<tspan font-family="Liberation Sans" font-size="13">000</tspan></text><text x="458 466.4 474.4 482 490.4 498" y="422" fill="#c4c4c4" font-size="13.333" style="white-space:pre">9<tspan font-family="Liberation Sans" font-size="13">00</tspan>.<tspan font-family="Liberation Sans" font-size="13">0</tspan>m</text><text x="458 466.4 474.4 482 490.4 498" y="450" fill="#c4c4c4" font-size="13.333" style="white-space:pre">8<tspan font-family="Liberation Sans" font-size="13">00</tspan>.<tspan font-family="Liberation Sans" font-size="13">0</tspan>m</text><text x="458 466.4 474.4 482 490.4 498" y="479" fill="#c4c4c4" font-size="13.333" style="white-space:pre">7<tspan font-family="Liberation Sans" font-size="13">00</tspan>.<tspan font-family="Liberation Sans" font-size="13">0</tspan>m</text><text x="458 466.4 474.4 482 490.4 498" y="507" fill="#c4c4c4" font-size="13.333" style="white-space:pre">6<tspan font-family="Liberation Sans" font-size="13">00</tspan>.<tspan font-family="Liberation Sans" font-size="13">0</tspan>m</text><text x="458 466.4 474.4 482 490.4 498" y="535" fill="#c4c4c4" font-size="13.333" style="white-space:pre">5<tspan font-family="Liberation Sans" font-size="13">00</tspan>.<tspan font-family="Liberation Sans" font-size="13">0</tspan>m</text><text x="458 466.4 474.4 482 490.4 498" y="563" fill="#c4c4c4" font-size="13.333" style="white-space:pre">4<tspan font-family="Liberation Sans" font-size="13">00</tspan>.<tspan font-family="Liberation Sans" font-size="13">0</tspan>m</text><text x="458 466.4 474.4 482 490.4 498" y="591" fill="#c4c4c4" font-size="13.333" style="white-space:pre">3<tspan font-family="Liberation Sans" font-size="13">00</tspan>.<tspan font-family="Liberation Sans" font-size="13">0</tspan>m</text><text x="458 466.4 474.4 482 490.4 498" y="620" fill="#c4c4c4" font-size="13.333" style="white-space:pre">2<tspan font-family="Liberation Sans" font-size="13">00</tspan>.<tspan font-family="Liberation Sans" font-size="13">0</tspan>m</text><text x="458 466.4 474.4 482 490.4 498" y="648" fill="#c4c4c4" font-size="13.333" style="white-space:pre">1<tspan font-family="Liberation Sans" font-size="13">00</tspan>.<tspan font-family="Liberation Sans" font-size="13">0</tspan>m</text><text x="466.4 474 482.4 490.4 498.4" y="676" fill="#00ff00" font-size="13.333" style="white-space:pre"><tspan font-family="Liberation Sans" font-size="13">0</tspan>.<tspan font-family="Liberation Sans" font-size="13">000</tspan></text><line x1="517" y1="672.5" x2="869" y2="672.5" stroke="#00ff00" stroke-width="1"/><polygon points="516.3822055137845,672.5 519.3822055137845,672.5 522.3822055137845,685.0 513.3822055137845,685.0" stroke="#00ff00" fill="none" stroke-width="1" shape-rendering="crispEdges"/><text x="513.882" y="695.5" fill="#00ff00" font-size="13.333" style="white-space:pre">1</text><polygon points="523.4398496240601,672.5 526.4398496240601,672.5 529.4398496240601,685.0 520.4398496240601,685.0" stroke="#00ff00" fill="none" stroke-width="1" shape-rendering="crispEdges"/><text x="520.94" y="695.5" fill="#00ff00" font-size="13.333" style="white-space:pre">2</text><polygon points="532.2619047619048,672.5 535.2619047619048,672.5 538.2619047619048,685.0 529.2619047619048,685.0" stroke="#00ff00" fill="none" stroke-width="1" shape-rendering="crispEdges"/><text x="529.762" y="695.5" fill="#00ff00" font-size="13.333" style="white-space:pre">3</text><polygon points="558.7280701754386,672.5 561.7280701754386,672.5 564.7280701754386,685.0 555.7280701754386,685.0" stroke="#00ff00" fill="none" stroke-width="1" shape-rendering="crispEdges"/><text x="556.228" y="695.5" fill="#00ff00" font-size="13.333" style="white-space:pre">4</text><polygon points="602.8383458646616,672.5 605.8383458646616,672.5 608.8383458646616,685.0 599.8383458646616,685.0" stroke="#00ff00" fill="none" stroke-width="1" shape-rendering="crispEdges"/><text x="600.338" y="695.5" fill="#00ff00" font-size="13.333" style="white-space:pre">5</text><polygon points="691.0588972431078,672.5 694.0588972431078,672.5 697.0588972431078,685.0 688.0588972431078,685.0" stroke="#00ff00" fill="none" stroke-width="1" shape-rendering="crispEdges"/><text x="688.559" y="695.5" fill="#00ff00" font-size="13.333" style="white-space:pre">6</text><polygon points="867.5,672.5 870.5,672.5 873.5,685.0 864.5,685.0" stroke="#00ff00" fill="none" stroke-width="1" shape-rendering="crispEdges"/><text x="865" y="695.5" fill="#00ff00" font-size="13.333" style="white-space:pre">7</text><polygon points="847.9323841604009,672.5 848.9323841604009,672.5 852.9323841604009,659.0 843.9323841604009,659.0" stroke="#00ff00" fill="none" stroke-width="1" shape-rendering="crispEdges"/><text x="844.932" y="655.5" fill="#00ff00" font-size="13.333" style="white-space:pre">8</text><polygon points="509,665.0 517,672.5 509,680.0" fill="#00ff00"/><text x="871" y="676" fill="#00ff00" font-size="13.333" style="white-space:pre">2</text><polygon points="878,665.0 870,672.5 878,680.0" fill="#00ff00"/><polygon points="517.8822055137845,673 524.8822055137845,680 510.88220551378447,680" stroke="#00ff00" fill="none" stroke-width="1" shape-rendering="crispEdges"/><polygon points="524.9398496240601,673 531.9398496240601,680 517.9398496240601,680" stroke="#00ff00" fill="none" stroke-width="1" shape-rendering="crispEdges"/><polygon points="533.7619047619048,673 540.7619047619048,680 526.7619047619048,680" stroke="#00ff00" fill="none" stroke-width="1" shape-rendering="crispEdges"/><polygon points="560.2280701754386,673 567.2280701754386,680 553.2280701754386,680" stroke="#00ff00" fill="none" stroke-width="1" shape-rendering="crispEdges"/><polygon points="604.3383458646616,673 611.3383458646616,680 597.3383458646616,680" stroke="#00ff00" fill="none" stroke-width="1" shape-rendering="crispEdges"/><polygon points="692.5588972431078,673 699.5588972431078,680 685.5588972431078,680" stroke="#00ff00" fill="none" stroke-width="1" shape-rendering="crispEdges"/><polygon points="869.0,673 876.0,680 862.0,680" stroke="#00ff00" fill="none" stroke-width="1" shape-rendering="crispEdges"/><polygon points="848.4323841604009,673 855.4323841604009,680 841.4323841604009,680" stroke="#00ff00" fill="#00ff00" stroke-width="1" shape-rendering="crispEdges"/><text x="453 461 469 477 485 493 501 509 517 525 533 541 549 557 565 573 581.4 589.4 597 605.4 613 621 629 637 645 653 661 669 677.4 685 693.4 701.4 709.4 717 725 733 741 749 757 765 773 781 789" y="376" fill="#00ff00" font-size="13.333" style="white-space:pre">Tr4 Ls Lin Mag 1<tspan font-family="Liberation Sans" font-size="13">00</tspan>.<tspan font-family="Liberation Sans" font-size="13">0</tspan>mU/ Ref <tspan font-family="Liberation Sans" font-size="13">0</tspan>.<tspan font-family="Liberation Sans" font-size="13">000</tspan>U [F2 Equ]</text><text x="519.5 527.5 535.5 543.5 551.5 559.9 567.9 575.5 583.9 591.9 599.9 607.9 615.9 623.5 631.5 639.5 647.5 655.5 663.5 671.5 679.5 687.5 695.5 703.5 711.5 719.5 727.5 735.5" y="402" fill="#00ff00" font-size="13.333" style="white-space:pre"> 1  1<tspan font-family="Liberation Sans" font-size="13">00</tspan>.<tspan font-family="Liberation Sans" font-size="13">00000</tspan> MHz  1.4554 nU</text><text x="519.5 527.5 535.5 543.5 551.5 559.9 567.9 575.5 583.9 591.9 599.9 607.9 615.9 623.5 631.5 639.5 647.5 655.5 663.5 671.5 679.5 687.5 695.5 703.5 711.5 719.5 727.5 735.5" y="415" fill="#00ff00" font-size="13.333" style="white-space:pre"> 2  5<tspan font-family="Liberation Sans" font-size="13">00</tspan>.<tspan font-family="Liberation Sans" font-size="13">00000</tspan> MHz  1.3898 nU</text><text x="519.5 527.5 535.5 543.5 551.5 559.5 567.9 575.9 583.9 591.9 599.9 607.9 615.9 623.5 631.5 639.5 647.5 655.5 663.5 671.5 679.5 687.5 695.5 703.5 711.5 719.5 727.5 735.5" y="428" fill="#00ff00" font-size="13.333" style="white-space:pre"> 3  1.<tspan font-family="Liberation Sans" font-size="13">0000000</tspan> GHz  1.3882 nU</text><text x="519.5 527.5 535.5 543.5 551.5 559.5 567.5 575.9 583.9 591.9 599.9 607.9 615.9 623.5 631.5 639.5 647.5 655.5 663.5 671.5 679.5 687.5 695.5 703.5 711.5 719.5 727.5 735.5" y="441" fill="#00ff00" font-size="13.333" style="white-space:pre"> 4  2.5<tspan font-family="Liberation Sans" font-size="13">000000</tspan> GHz  1.3862 nU</text><text x="519.5 527.5 535.5 543.5 551.5 559.5 567.9 575.9 583.9 591.9 599.9 607.9 615.9 623.5 631.5 639.5 647.5 655.5 663.5 671.5 679.5 687.5 695.5 703.5 711.5 719.5 727.5 735.5" y="454" fill="#00ff00" font-size="13.333" style="white-space:pre"> 5  5.<tspan font-family="Liberation Sans" font-size="13">0000000</tspan> GHz  1.4415 nU</text><text x="519.5 527.5 535.5 543.5 551.5 559.9 567.5 575.9 583.9 591.9 599.9 607.9 615.9 623.5 631.5 639.5 647.5 655.5 663.5 671.5 679.5 687.5 695.5 703.5 711.5 719.5 727.5 735.5" y="467" fill="#00ff00" font-size="13.333" style="white-space:pre"> 6  1<tspan font-family="Liberation Sans" font-size="13">0</tspan>.<tspan font-family="Liberation Sans" font-size="13">000000</tspan> GHz  1.7717 nU</text><text x="519.5 527.5 535.5 543.5 551.5 559.9 567.5 575.9 583.9 591.9 599.9 607.9 615.9 623.5 631.5 639.5 647.5 655.5 663.5 671.5 679.5 687.5 695.5 703.5 711.5 719.5 727.5 735.5" y="480" fill="#00ff00" font-size="13.333" style="white-space:pre"> 7  2<tspan font-family="Liberation Sans" font-size="13">0</tspan>.<tspan font-family="Liberation Sans" font-size="13">000000</tspan> GHz  5.4773 nU</text><text x="519.5 527.5 535.5 543.5 551.5 559.5 567.5 575.5 583.5 591.5 599.5 607.9 615.5 623.5 631.5 639.5 647.5 655.5 663.5 671.5 679.5 687.5 695.5 703.5 711.9 719.5 727.5 735.5" y="493" fill="#00ff00" font-size="13.333" style="white-space:pre">&gt;8  18.8343<tspan font-family="Liberation Sans" font-size="13">0</tspan>7 GHz  8.213<tspan font-family="Liberation Sans" font-size="13">0</tspan> nU</text><clipPath id="uc"><circle cx="221.75" cy="531.50" r="141.50"/></clipPath><g stroke="#3c3c3c" fill="none" stroke-width="1" clip-path="url(#uc)"><circle cx="245.33" cy="531.5" r="117.92"/><circle cx="268.92" cy="531.5" r="94.33"/><circle cx="292.50" cy="531.5" r="70.75"/><circle cx="316.08" cy="531.5" r="47.17"/><circle cx="339.67" cy="531.5" r="23.58"/><circle cx="363.25" cy="3.41" r="528.09"/><circle cx="363.25" cy="1059.59" r="528.09"/><circle cx="363.25" cy="286.41" r="245.09"/><circle cx="363.25" cy="776.59" r="245.09"/><circle cx="363.25" cy="390.00" r="141.50"/><circle cx="363.25" cy="673.00" r="141.50"/><circle cx="363.25" cy="449.80" r="81.70"/><circle cx="363.25" cy="613.20" r="81.70"/><circle cx="363.25" cy="493.59" r="37.91"/><circle cx="363.25" cy="569.41" r="37.91"/></g><line x1="80.25" y1="531.5" x2="363.25" y2="531.5" stroke="#a8a8a8" stroke-width="1"/><circle cx="221.75" cy="531.5" r="141.5" stroke="#b8b8b8" fill="none" stroke-width="1"/><polyline points="221.99,531.20 221.99,530.79 222.00,530.38 222.01,529.97 222.02,529.56 222.03,529.15 222.05,528.74 222.07,528.33 222.09,527.92 222.11,527.51 222.14,527.10 222.17,526.69 222.20,526.27 222.23,525.86 222.27,525.45 222.31,525.04 222.35,524.63 222.40,524.21 222.45,523.80 222.50,523.39 222.55,522.98 222.61,522.56 222.67,522.15 222.73,521.74 222.79,521.33 222.86,520.92 222.93,520.50 223.00,520.09 223.08,519.68 223.15,519.27 223.23,518.86 223.32,518.45 223.40,518.04 223.49,517.63 223.58,517.22 223.67,516.81 223.77,516.41 223.87,516.00 223.97,515.59 224.07,515.19 224.18,514.78 224.29,514.38 224.40,513.97 224.51,513.57 224.63,513.17 224.75,512.76 224.87,512.36 225.00,511.96 225.12,511.56 225.25,511.16 225.39,510.77 225.52,510.37 225.66,509.97 225.80,509.58 225.94,509.18 226.09,508.79 226.24,508.40 226.39,508.01 226.54,507.62 226.70,507.23 226.85,506.84 227.01,506.46 227.18,506.07 227.34,505.69 227.51,505.30 227.68,504.92 227.86,504.54 228.03,504.16 228.21,503.79 228.39,503.41 228.58,503.04 228.76,502.66 228.95,502.29 229.14,501.92 229.34,501.56 229.54,501.19 229.73,500.82 229.94,500.46 230.14,500.10 230.35,499.74 230.56,499.38 230.77,499.02 230.98,498.67 231.20,498.32 231.42,497.96 231.64,497.62 231.87,497.27 232.09,496.92 232.32,496.58 232.56,496.24 232.79,495.90 233.03,495.56 233.27,495.22 233.51,494.89 233.75,494.56 234.00,494.23 234.25,493.90 234.50,493.58 234.76,493.26 235.01,492.94 235.27,492.62 235.54,492.30 235.80,491.99 236.07,491.68 236.34,491.37 236.61,491.06 236.88,490.76 237.16,490.46 237.44,490.16 237.72,489.86 238.01,489.57 238.29,489.28 238.58,488.99 238.88,488.70 239.17,488.42 239.47,488.14 239.77,487.86 240.07,487.59 240.37,487.31 240.68,487.04 240.99,486.78 241.30,486.51 241.61,486.25 241.93,485.99 242.25,485.74 242.57,485.49 242.89,485.24 243.22,484.99 243.55,484.75 243.88,484.51 244.21,484.27 244.55,484.04 244.89,483.81 245.23,483.58 245.57,483.35 245.91,483.13 246.26,482.91 246.61,482.70 246.96,482.48 247.31,482.27 247.67,482.07 248.03,481.86 248.38,481.66 248.75,481.46 249.11,481.26 249.47,481.07 249.84,480.88 250.21,480.69 250.58,480.51 250.95,480.32 251.32,480.14 251.70,479.97 252.08,479.79 252.45,479.62 252.83,479.45 253.22,479.28 253.60,479.12 253.98,478.96 254.37,478.80 254.76,478.64 255.14,478.49 255.53,478.33 255.92,478.18 256.32,478.04 256.71,477.89 257.10,477.75 257.50,477.61 257.89,477.47 258.29,477.34 258.69,477.21 259.09,477.07 259.49,476.95 259.89,476.82 260.29,476.70 260.70,476.57 261.10,476.46 261.50,476.34 261.91,476.22 262.31,476.11 262.72,476.00 263.13,475.89 263.54,475.78 263.94,475.68 264.35,475.58 264.76,475.48 265.17,475.38 265.58,475.28 265.99,475.19 266.40,475.09 266.81,475.00 267.22,474.91 267.63,474.83 268.04,474.74 268.46,474.66 268.87,474.58 269.28,474.50 269.69,474.42 270.10,474.34 270.51,474.27 270.93,474.20 271.34,474.13 271.75,474.06 272.16,473.99 272.58,473.93 272.99,473.87 273.40,473.80 273.81,473.75 274.23,473.69 274.64,473.63 275.05,473.58 275.47,473.53 275.88,473.48 276.29,473.43 276.70,473.39 277.12,473.34 277.53,473.30 277.94,473.26 278.36,473.22 278.77,473.19 279.18,473.15 279.60,473.12 280.01,473.09 280.42,473.06 280.83,473.04 281.25,473.01 281.66,472.99 282.07,472.97 282.49,472.95 282.90,472.93 283.31,472.92 283.72,472.91 284.14,472.90 284.55,472.89 284.96,472.88 285.37,472.88 285.78,472.87 286.20,472.87 286.61,472.87 287.02,472.88 287.43,472.88 287.84,472.89 288.25,472.90 288.67,472.91 289.08,472.92 289.49,472.94 289.90,472.95 290.31,472.97 290.72,472.99 291.13,473.02 291.54,473.04 291.95,473.07 292.36,473.10 292.77,473.13 293.18,473.16 293.59,473.19 293.99,473.23 294.40,473.27 294.81,473.31 295.22,473.35 295.63,473.40 296.03,473.45 296.44,473.50 296.85,473.55 297.25,473.60 297.66,473.65 298.07,473.71 298.47,473.77 298.88,473.83 299.28,473.90 299.69,473.96 300.09,474.03 300.50,474.10 300.90,474.17 301.31,474.24 301.71,474.32 302.11,474.40 302.52,474.48 302.92,474.56 303.32,474.64 303.72,474.73 304.12,474.81 304.53,474.90 304.93,474.99 305.33,475.09 305.73,475.18 306.13,475.28 306.53,475.38 306.93,475.48 307.33,475.58 307.73,475.69 308.13,475.80 308.53,475.91 308.93,476.02 309.32,476.13 309.72,476.25 310.12,476.36 310.52,476.48 310.92,476.60 311.31,476.72 311.71,476.85 312.11,476.98 312.50,477.10 312.90,477.23 313.29,477.37 313.69,477.50 314.09,477.64 314.48,477.78 314.88,477.91 315.27,478.06 315.67,478.20 316.06,478.35 316.45,478.49 316.85,478.64 317.24,478.79 317.64,478.95 318.03,479.10 318.42,479.26 318.81,479.42 319.21,479.58 319.60,479.74 319.99,479.90 320.38,480.07 320.77,480.24 321.16,480.41 321.55,480.58 321.93,480.76 322.32,480.93 322.71,481.11 323.09,481.29 323.48,481.47 323.86,481.66 324.24,481.84 324.62,482.03 325.00,482.22 325.38,482.42 325.76,482.61 326.14,482.81 326.51,483.01 326.88,483.21 327.26,483.41 327.63,483.62 328.00,483.83 328.36,484.04 328.73,484.25 329.09,484.46 329.45,484.68 329.82,484.90 330.17,485.12 330.53,485.34 330.89,485.57 331.24,485.80 331.59,486.03 331.94,486.26 332.29,486.50 332.63,486.73 332.97,486.97 333.31,487.21 333.65,487.46 333.99,487.71 334.32,487.96 334.65,488.21 334.98,488.46 335.30,488.72 335.63,488.98 335.95,489.24 336.26,489.50 336.58,489.77 336.89,490.04 337.20,490.31 337.51,490.58 337.81,490.86 338.11,491.14 338.41,491.42 338.70,491.71 338.99,491.99 339.28,492.28 339.57,492.57 339.85,492.87 340.13,493.16 340.40,493.46 340.68,493.76 340.95,494.07 341.22,494.37 341.48,494.68 341.74,494.99 342.00,495.31 342.26,495.62 342.51,495.94 342.76,496.26 343.01,496.58 343.25,496.90 343.50,497.23 343.73,497.56 343.97,497.89 344.20,498.22 344.43,498.55 344.66,498.89 344.89,499.23 345.11,499.56 345.33,499.91 345.55,500.25 345.76,500.60 345.97,500.94 346.18,501.29 346.39,501.64 346.59,501.99 346.79,502.35 346.99,502.70 347.18,503.06 347.38,503.42 347.57,503.78 347.75,504.14 347.94,504.51 348.12,504.87 348.30,505.24 348.48,505.61 348.65,505.98 348.82,506.35 348.99,506.72 349.16,507.10 349.32,507.47 349.48,507.85 349.64,508.23 349.80,508.61 349.95,508.99 350.11,509.37 350.26,509.76 350.40,510.14 350.55,510.53 350.69,510.91 350.83,511.30 350.96,511.69 351.10,512.08 351.23,512.47 351.36,512.87 351.49,513.26 351.61,513.65 351.74,514.05 351.86,514.45 351.97,514.84 352.09,515.24 352.20,515.64 352.31,516.04 352.42,516.44 352.53,516.84 352.63,517.25 352.73,517.65 352.83,518.05 352.93,518.46 353.03,518.86 353.12,519.27 353.21,519.68 353.30,520.08 353.38,520.49 353.47,520.90 353.55,521.31 353.63,521.72 353.71,522.13 353.78,522.54 353.86,522.95 353.93,523.36 354.00,523.77 354.06,524.18 354.13,524.60 354.19,525.01 354.25,525.42 354.31,525.83 354.37,526.25 354.42,526.66 354.47,527.07 354.52,527.49 354.57,527.90 354.62,528.32 354.66,528.73 354.70,529.14 354.74,529.56 354.78,529.97 354.82,530.39 354.85,530.80 354.89,531.22 354.92,531.63 354.95,532.05 354.98,532.46 355.00,532.88 355.03,533.29 355.05,533.71 355.07,534.12 355.09,534.54 355.10,534.95 355.12,535.37 355.14,535.79 355.15,536.20 355.16,536.62 355.17,537.03 355.18,537.45 355.18,537.86 355.19,538.28 355.19,538.70 355.20,539.11 355.20,539.53 355.20,539.94 355.20,540.36 355.19,540.78 355.19,541.19 355.19,541.61 355.18,542.02 355.17,542.44 355.16,542.86 355.15,543.27 355.14,543.69 355.13,544.10 355.12,544.52 355.10,544.94 355.09,545.35 355.07,545.77 355.06,546.18 355.04,546.60 355.02,547.02 355.00,547.43 354.98,547.85 354.96,548.26 354.94,548.68 354.91,549.09 354.89,549.51 354.87,549.93 354.84,550.34 354.81,550.76 354.79,551.17 354.76,551.59 354.73,552.00 354.71,552.42 354.68,552.83 354.65,553.25 354.62,553.66 354.59,554.08 354.56,554.49 354.52,554.91 354.49,555.32 354.46,555.74 354.43,556.15 354.40,556.56 354.36,556.98 354.33,557.39 354.30,557.81 354.26,558.22 354.23,558.63 354.19,559.05 354.16,559.46 354.12,559.87 354.09,560.29 354.05,560.70 354.02,561.11 353.98,561.52 353.95,561.94 353.91,562.35 353.88,562.76 353.84,563.17 353.81,563.58 353.78,564.00 353.74,564.41 353.71,564.82 353.67,565.23 353.64,565.64 353.60,566.05 353.57,566.46 353.54,566.87 353.50,567.28 353.47,567.69 353.44,568.10 353.40,568.51 353.37,568.92 353.34,569.33 353.30,569.74 353.27,570.15 353.24,570.56 353.20,570.97 353.17,571.37 353.14,571.78 353.11,572.19 353.07,572.60 353.04,573.01 353.01,573.41 352.97,573.82 352.94,574.23 352.91,574.63 352.87,575.04 352.84,575.45 352.80,575.85 352.77,576.26 352.73,576.66 352.70,577.07 352.67,577.47 352.63,577.88 352.60,578.28 352.56,578.69 352.52,579.09 352.49,579.50 352.45,579.90 352.41,580.30 352.38,580.71" stroke="#ff00ff" fill="none" stroke-width="1" shape-rendering="crispEdges"/><polygon points="220.41128300407223,530.3957118562116 223.41128300407223,530.3957118562116 226.41128300407223,542.8957118562116 217.41128300407223,542.8957118562116" stroke="#ff00ff" fill="none" stroke-width="1" shape-rendering="crispEdges"/><text x="217.911" y="553.3957118562116" fill="#ff00ff" font-size="13.333" style="white-space:pre">1</text><polygon points="220.79588036682543,526.4778944129899 223.79588036682543,526.4778944129899 226.79588036682543,538.9778944129899 217.79588036682543,538.9778944129899" stroke="#ff00ff" fill="none" stroke-width="1" shape-rendering="crispEdges"/><text x="218.296" y="549.4778944129899" fill="#ff00ff" font-size="13.333" style="white-space:pre">2</text><polygon points="221.46148749031698,521.4639541359664 224.46148749031698,521.4639541359664 227.46148749031698,533.9639541359664 218.46148749031698,533.9639541359664" stroke="#ff00ff" fill="none" stroke-width="1" shape-rendering="crispEdges"/><text x="218.961" y="544.4639541359664" fill="#ff00ff" font-size="13.333" style="white-space:pre">3</text><polygon points="225.55139573916213,506.13189259044316 228.55139573916213,506.13189259044316 231.55139573916213,518.6318925904432 222.55139573916213,518.6318925904432" stroke="#ff00ff" fill="none" stroke-width="1" shape-rendering="crispEdges"/><text x="223.051" y="529.1318925904432" fill="#ff00ff" font-size="13.333" style="white-space:pre">4</text><polygon points="241.72540577016088,484.33870827657296 244.72540577016088,484.33870827657296 247.72540577016088,496.83870827657296 238.72540577016088,496.83870827657296" stroke="#ff00ff" fill="none" stroke-width="1" shape-rendering="crispEdges"/><text x="239.225" y="507.33870827657296" fill="#ff00ff" font-size="13.333" style="white-space:pre">5</text><polygon points="297.11620744427915,473.2169603999629 300.11620744427915,473.2169603999629 303.11620744427915,485.7169603999629 294.11620744427915,485.7169603999629" stroke="#ff00ff" fill="none" stroke-width="1" shape-rendering="crispEdges"/><text x="294.616" y="496.2169603999629" fill="#ff00ff" font-size="13.333" style="white-space:pre">6</text><polygon points="350.54161172149685,580.7023788208725 353.54161172149685,580.7023788208725 356.54161172149685,593.2023788208725 347.54161172149685,593.2023788208725" stroke="#ff00ff" fill="none" stroke-width="1" shape-rendering="crispEdges"/><text x="348.042" y="603.7023788208725" fill="#ff00ff" font-size="13.333" style="white-space:pre">7</text><polygon points="352.8407200651317,575.5489275541602 353.8407200651317,575.5489275541602 357.8407200651317,562.0489275541602 348.8407200651317,562.0489275541602" stroke="#ff00ff" fill="none" stroke-width="1" shape-rendering="crispEdges"/><text x="349.841" y="558.5489275541602" fill="#ff00ff" font-size="13.333" style="white-space:pre">8</text><polygon points="17.037593984962406,673 24.037593984962406,680 10.037593984962406,680" stroke="#ff00ff" fill="none" stroke-width="1" shape-rendering="crispEdges"/><polygon points="25.338345864661655,673 32.338345864661655,680 18.338345864661655,680" stroke="#ff00ff" fill="none" stroke-width="1" shape-rendering="crispEdges"/><polygon points="35.71428571428571,673 42.71428571428571,680 28.714285714285708,680" stroke="#ff00ff" fill="none" stroke-width="1" shape-rendering="crispEdges"/><polygon points="66.84210526315789,673 73.84210526315789,680 59.84210526315789,680" stroke="#ff00ff" fill="none" stroke-width="1" shape-rendering="crispEdges"/><polygon points="118.72180451127821,673 125.72180451127821,680 111.72180451127821,680" stroke="#ff00ff" fill="none" stroke-width="1" shape-rendering="crispEdges"/><polygon points="222.4812030075188,673 229.4812030075188,680 215.4812030075188,680" stroke="#ff00ff" fill="none" stroke-width="1" shape-rendering="crispEdges"/><polygon points="430.0,673 437.0,680 423.0,680" stroke="#ff00ff" fill="none" stroke-width="1" shape-rendering="crispEdges"/><polygon points="405.8096790977443,673 412.8096790977443,680 398.8096790977443,680" stroke="#ff00ff" fill="#ff00ff" stroke-width="1" shape-rendering="crispEdges"/><text x="15 23 31 39 47 55 63 71 79 87 95 103 111 119 127 135 143 151 159 167 175 183 191 199 207 215 223 231 239 247.4 255.4 263.4 271 279 287 295 303 311" y="376" fill="#ff00ff" font-size="13.333" style="white-space:pre">Tr3 S33 Smith (R+jX) Scale 1.<tspan font-family="Liberation Sans" font-size="13">000</tspan>U [F2]</text><text x="18.5 26.5 34.5 42.5 50.5 58.9 66.9 74.5 82.9 90.9 98.9 106.9 114.9 122.5 130.5 138.5 146.5 154.5 162.5 170.5 178.9 186.5 194.5 202.9 210.5 218.5 226.5 234.5 242.5 250.5 258.5 266.5 274.5 282.5 290.5 298.5 306.5 314.5 322.5 330.5 338.5 346.5 354.5 362.5 370.5 378.5 386.5 394.5 402.5" y="402" fill="#ff00ff" font-size="13.333" style="white-space:pre"> 1  1<tspan font-family="Liberation Sans" font-size="13">00</tspan>.<tspan font-family="Liberation Sans" font-size="13">00000</tspan> MHz  5<tspan font-family="Liberation Sans" font-size="13">0</tspan>.1<tspan font-family="Liberation Sans" font-size="13">0</tspan>8 Ω  782.15 mΩ  1.2448 nH</text><text x="18.5 26.5 34.5 42.5 50.5 58.9 66.9 74.5 82.9 90.9 98.9 106.9 114.9 122.5 130.5 138.5 146.5 154.5 162.5 170.5 178.9 186.5 194.5 202.5 210.9 218.5 226.5 234.5 242.5 250.5 258.5 266.5 274.5 282.5 290.5 298.5 306.5 314.5 322.5 330.5 338.5 346.5 354.5 362.5 370.5 378.5 386.5 394.5 402.5" y="415" fill="#ff00ff" font-size="13.333" style="white-space:pre"> 2  5<tspan font-family="Liberation Sans" font-size="13">00</tspan>.<tspan font-family="Liberation Sans" font-size="13">00000</tspan> MHz  5<tspan font-family="Liberation Sans" font-size="13">0</tspan>.26<tspan font-family="Liberation Sans" font-size="13">0</tspan> Ω  3.5722 Ω   1.1371 nH</text><text x="18.5 26.5 34.5 42.5 50.5 58.5 66.9 74.9 82.9 90.9 98.9 106.9 114.9 122.5 130.5 138.5 146.5 154.5 162.5 170.5 178.9 186.5 194.5 202.5 210.9 218.5 226.5 234.5 242.5 250.5 258.5 266.5 274.5 282.5 290.5 298.5 306.5 314.5 322.5 330.5 338.5 346.5 354.5 362.5 370.5 378.5 386.5 394.5 402.5" y="428" fill="#ff00ff" font-size="13.333" style="white-space:pre"> 3  1.<tspan font-family="Liberation Sans" font-size="13">0000000</tspan> GHz  5<tspan font-family="Liberation Sans" font-size="13">0</tspan>.35<tspan font-family="Liberation Sans" font-size="13">0</tspan> Ω  7.1789 Ω   1.1426 nH</text><text x="18.5 26.5 34.5 42.5 50.5 58.5 66.5 74.9 82.9 90.9 98.9 106.9 114.9 122.5 130.5 138.5 146.5 154.5 162.5 170.5 178.9 186.5 194.5 202.9 210.5 218.5 226.5 234.5 242.5 250.5 258.5 266.5 274.5 282.9 290.5 298.5 306.5 314.5 322.5 330.5 338.5 346.5 354.5 362.5 370.9 378.5 386.5 394.5 402.5" y="441" fill="#ff00ff" font-size="13.333" style="white-space:pre"> 4  2.5<tspan font-family="Liberation Sans" font-size="13">000000</tspan> GHz  5<tspan font-family="Liberation Sans" font-size="13">0</tspan>.4<tspan font-family="Liberation Sans" font-size="13">0</tspan>9 Ω  18.7<tspan font-family="Liberation Sans" font-size="13">0</tspan>2 Ω   1.19<tspan font-family="Liberation Sans" font-size="13">0</tspan>6 nH</text><text x="18.5 26.5 34.5 42.5 50.5 58.5 66.9 74.9 82.9 90.9 98.9 106.9 114.9 122.5 130.5 138.5 146.5 154.5 162.5 170.5 178.5 186.5 194.5 202.5 210.5 218.5 226.5 234.5 242.5 250.5 258.9 266.5 274.5 282.5 290.5 298.5 306.5 314.5 322.5 330.5 338.5 346.5 354.5 362.5 370.5 378.5 386.5 394.5 402.5" y="454" fill="#ff00ff" font-size="13.333" style="white-space:pre"> 5  5.<tspan font-family="Liberation Sans" font-size="13">0000000</tspan> GHz  52.125 Ω  4<tspan font-family="Liberation Sans" font-size="13">0</tspan>.128 Ω   1.2773 nH</text><text x="18.5 26.5 34.5 42.5 50.5 58.9 66.5 74.9 82.9 90.9 98.9 106.9 114.9 122.5 130.5 138.5 146.5 154.5 162.5 170.5 178.9 186.5 194.5 202.5 210.5 218.5 226.5 234.5 242.5 250.5 258.9 266.5 274.5 282.5 290.5 298.5 306.5 314.5 322.5 330.5 338.5 346.5 354.5 362.5 370.5 378.5 386.5 394.5 402.5" y="467" fill="#ff00ff" font-size="13.333" style="white-space:pre"> 6  1<tspan font-family="Liberation Sans" font-size="13">0</tspan>.<tspan font-family="Liberation Sans" font-size="13">000000</tspan> GHz  7<tspan font-family="Liberation Sans" font-size="13">0</tspan>.744 Ω  1<tspan font-family="Liberation Sans" font-size="13">0</tspan>8.88 Ω   1.7328 nH</text><text x="18.5 26.5 34.5 42.5 50.5 58.9 66.5 74.9 82.9 90.9 98.9 106.9 114.9 122.5 130.5 138.5 146.5 154.5 162.5 170.5 178.5 186.5 194.5 202.5 210.5 218.5 226.5 234.5 242.5 250.5 258.5 266.5 274.5 282.5 290.9 298.5 306.5 314.5 322.5 330.5 338.5 346.5 354.5 362.5 370.9 378.5 386.5 394.5 402.5" y="480" fill="#ff00ff" font-size="13.333" style="white-space:pre"> 7  2<tspan font-family="Liberation Sans" font-size="13">0</tspan>.<tspan font-family="Liberation Sans" font-size="13">000000</tspan> GHz  12.281 Ω -273.4<tspan font-family="Liberation Sans" font-size="13">0</tspan> Ω   29.1<tspan font-family="Liberation Sans" font-size="13">0</tspan>7 fF</text><text x="18.5 26.5 34.5 42.5 50.5 58.5 66.5 74.5 82.5 90.5 98.5 106.9 114.5 122.5 130.5 138.5 146.5 154.5 162.5 170.5 178.5 186.5 194.5 202.5 210.5 218.5 226.5 234.5 242.5 250.5 258.9 266.5 274.5 282.5 290.5 298.5 306.5 314.5 322.5 330.5 338.5 346.5 354.5 362.5 370.5 378.5 386.5 394.5 402.5" y="493" fill="#ff00ff" font-size="13.333" style="white-space:pre">&gt;8  18.8343<tspan font-family="Liberation Sans" font-size="13">0</tspan>7 GHz  18.784 Ω -3<tspan font-family="Liberation Sans" font-size="13">0</tspan>5.76 Ω   27.642 fF</text></svg>
<svg width="1024" height="728" style="position:absolute;left:0;top:0;font-family:'Liberation Sans', sans-serif"><text x="3" y="16" fill="#000" font-size="13" text-anchor="start" textLength="133" lengthAdjust="spacingAndGlyphs" >E5071C Network Analyzer</text><text x="8" y="37" fill="#000" font-size="13" text-anchor="start" textLength="93" lengthAdjust="spacingAndGlyphs" >1 Active Ch/Trace</text><text x="114" y="37" fill="#000" font-size="13" text-anchor="start" textLength="59.5" lengthAdjust="spacingAndGlyphs" >2 Response</text><text x="187" y="37" fill="#000" font-size="13" text-anchor="start" textLength="55.5" lengthAdjust="spacingAndGlyphs" >3 Stimulus</text><text x="256" y="37" fill="#000" font-size="13" text-anchor="start" textLength="79" lengthAdjust="spacingAndGlyphs" >4 Mkr/Analysis</text><text x="348.5" y="37" fill="#000" font-size="13" text-anchor="start" textLength="61.5" lengthAdjust="spacingAndGlyphs" >5 Instr State</text><text x="985" y="37" fill="#000" font-size="13" text-anchor="start" textLength="32.5" lengthAdjust="spacingAndGlyphs" >Resize</text><text x="955" y="65" fill="#ffffff" font-size="13" text-anchor="middle" textLength="23" lengthAdjust="spacingAndGlyphs" >S2P</text><text x="954" y="100" fill="#101010" font-size="13" text-anchor="middle" textLength="48" lengthAdjust="spacingAndGlyphs" >[ 1-2 ]...</text><text x="954" y="135" fill="#101010" font-size="13" text-anchor="middle" textLength="48" lengthAdjust="spacingAndGlyphs" >[ 1-3 ]...</text><text x="954" y="170" fill="#101010" font-size="13" text-anchor="middle" textLength="48" lengthAdjust="spacingAndGlyphs" >[ 1-4 ]...</text><text x="954" y="205" fill="#101010" font-size="13" text-anchor="middle" textLength="48" lengthAdjust="spacingAndGlyphs" >[ 2-3 ]...</text><text x="954" y="240" fill="#101010" font-size="13" text-anchor="middle" textLength="48" lengthAdjust="spacingAndGlyphs" >[ 2-4 ]...</text><text x="954" y="275" fill="#ffffff" font-size="13" text-anchor="middle" textLength="48" lengthAdjust="spacingAndGlyphs" >[ 3-4 ]...</text><text x="955" y="310" fill="#101010" font-size="13" text-anchor="middle" textLength="38" lengthAdjust="spacingAndGlyphs" >Return</text><text x="7" y="699" fill="#000" font-size="12" text-anchor="start" >1</text><text x="21.5" y="699" fill="#000" font-size="12" text-anchor="start" >Start 50 MHz</text><text x="372" y="699" fill="#000" font-size="12" text-anchor="start" >IFBW 70 kHz</text><text x="722" y="699" fill="#000" font-size="12" text-anchor="start" >Stop 20 GHz</text><text x="820" y="699" fill="#fff" font-size="13" text-anchor="middle" textLength="32" lengthAdjust="spacingAndGlyphs" >16/16</text><text x="857" y="699" fill="#fff" font-size="13" text-anchor="middle" textLength="18.5" lengthAdjust="spacingAndGlyphs" >Cor</text><text x="727" y="722" fill="#fff" font-size="16" text-anchor="middle" textLength="33" lengthAdjust="spacingAndGlyphs" >Hold</text><text x="772.5" y="722" fill="#808080" font-size="16" text-anchor="middle" textLength="32" lengthAdjust="spacingAndGlyphs" >Stop</text><text x="821" y="722" fill="#808080" font-size="16" text-anchor="middle" textLength="46" lengthAdjust="spacingAndGlyphs" >ExtRef</text><text x="863.5" y="722" fill="#808080" font-size="16" text-anchor="middle" textLength="24" lengthAdjust="spacingAndGlyphs" >Svc</text><text x="951" y="722" fill="#fff" font-size="16" text-anchor="middle" textLength="131" lengthAdjust="spacingAndGlyphs" >2022-01-11 13:30</text></svg>
</body></html>
